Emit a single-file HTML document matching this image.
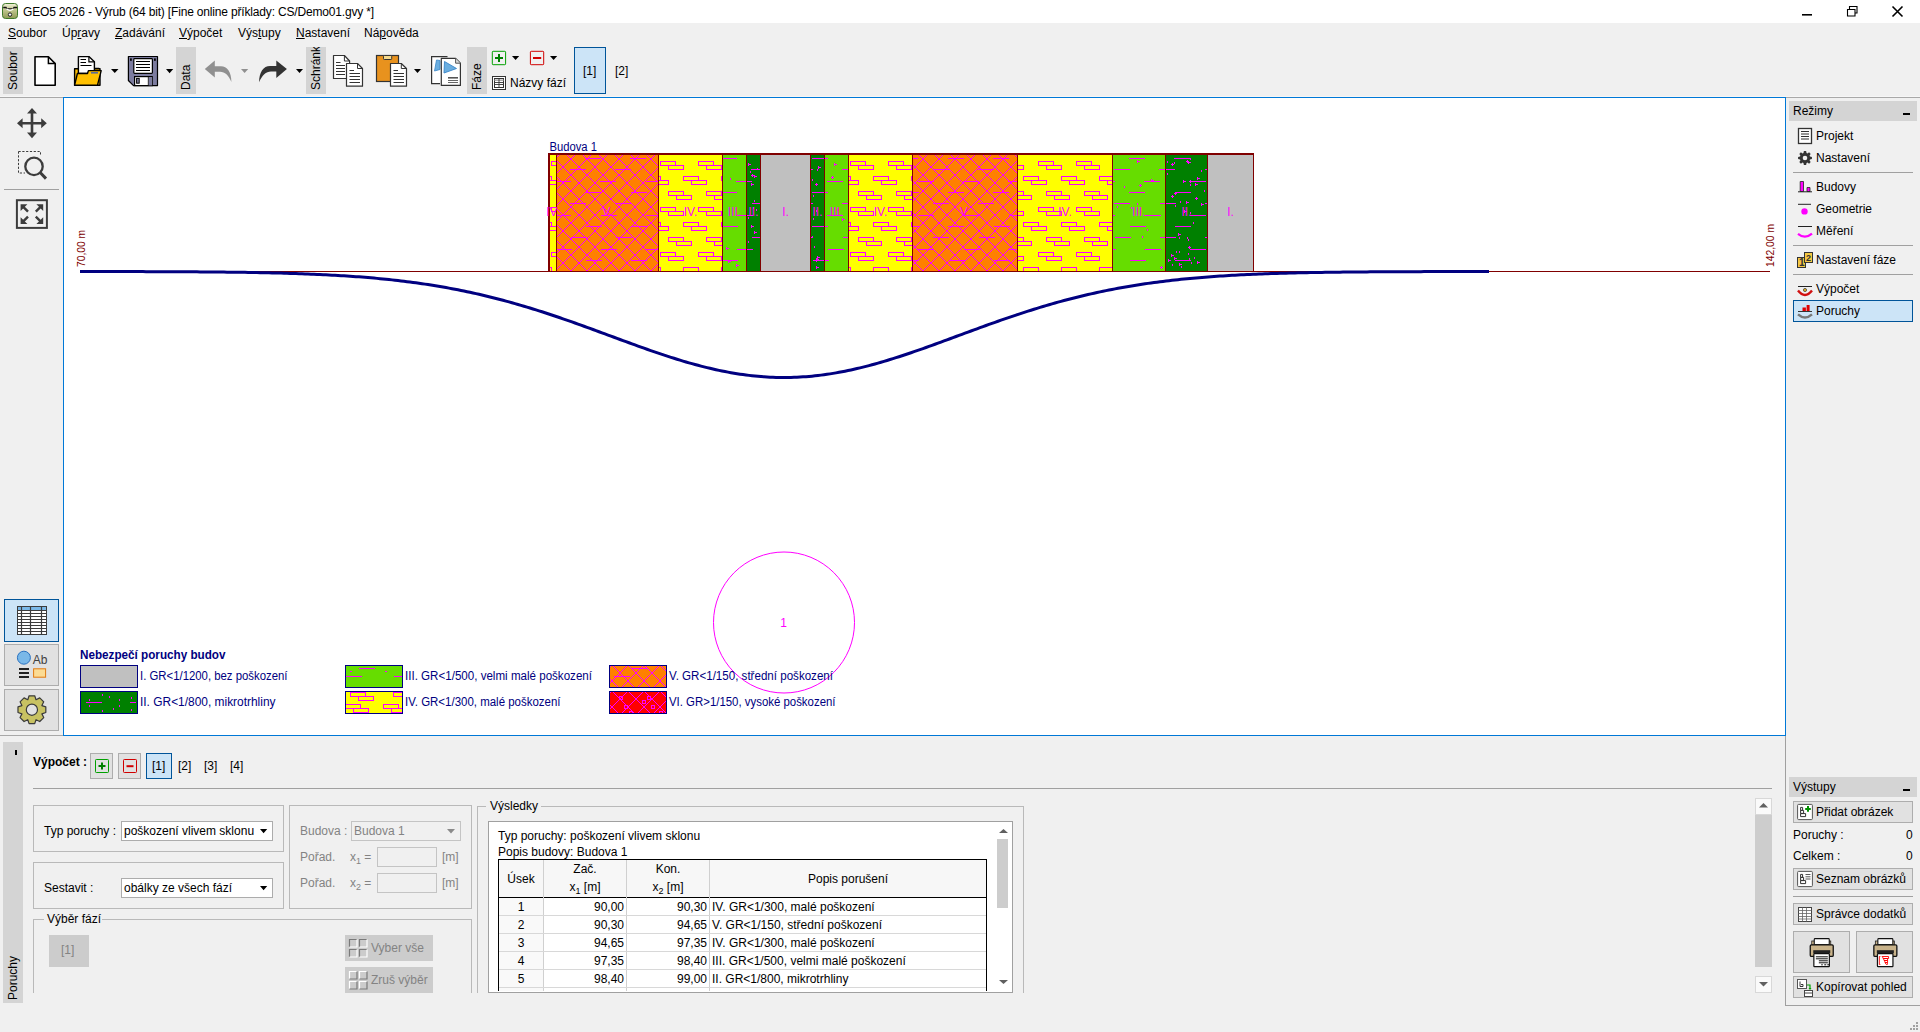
<!DOCTYPE html>
<html><head><meta charset="utf-8">
<style>
*{box-sizing:border-box;margin:0;padding:0}
html,body{width:1920px;height:1032px;overflow:hidden;background:#f0f0f0;font-family:"Liberation Sans",sans-serif;font-size:12px;color:#000}
.a{position:absolute}
.t{position:absolute;white-space:nowrap;line-height:14px}
#title{left:0;top:0;width:1920px;height:23px;background:#fff}
#menu{left:0;top:23px;width:1920px;height:24px;background:#f0f0f0}
.vtab{position:absolute;top:47px;width:20px;height:47px;background:#d4d4d4;overflow:hidden}
.vtab span{position:absolute;left:3px;top:43px;transform-origin:0 0;transform:rotate(-90deg);white-space:nowrap;line-height:14px;font-size:12px}
#canvas{left:63px;top:97px;width:1723px;height:639px;background:#fff;border:1px solid #0078d7}
.btn{position:absolute;background:#e1e1e1;border:1px solid #adadad}
.sel{position:absolute;background:#cce4f7;border:1px solid #005499}
.grp{position:absolute;border:1px solid #b9b9b9}
.combo{position:absolute;background:#fff;border:1px solid #acacac}
.u{text-decoration:underline}
</style></head><body>
<!-- title bar -->
<div id="title" class="a"></div>
<div class="t" style="left:23px;top:5px;font-size:12px;letter-spacing:-0.17px">GEO5 2026 - Výrub (64 bit) [Fine online příklady: CS/Demo01.gvy *]</div>
<svg class="a" style="left:0;top:0" width="1920" height="23">
 <defs><linearGradient id="gi" x1="0" y1="0" x2="0" y2="1"><stop offset="0" stop-color="#f2f2dc"/><stop offset="0.35" stop-color="#c8cc98"/><stop offset="1" stop-color="#8f9a55"/></linearGradient></defs>
 <rect x="2.5" y="3.5" width="15" height="15" rx="3" fill="url(#gi)" stroke="#3f7a2a" stroke-width="1"/>
 <path d="M3.2 7.5H6Q6.5 8.8 8 8.8H12Q13.5 8.8 14 7.5H17" fill="none" stroke="#111" stroke-width="1.3"/>
 <path d="M6.5 8.8Q10 12 13.5 8.8" fill="none" stroke="#fff" stroke-width="1.2"/>
 <circle cx="10" cy="14.6" r="1.7" fill="#fff" stroke="#222" stroke-width="1"/>
 <path d="M1802 14.8h10" stroke="#000" stroke-width="1.6"/>
 <path d="M1847.5 9.5h7.5v6.5h-7.5z" fill="none" stroke="#000" stroke-width="1.1"/>
 <path d="M1849.5 9.5v-3h7.5v6.5h-2" fill="none" stroke="#000" stroke-width="1.1"/>
 <path d="M1892.5 6.5l10 10M1902.5 6.5l-10 10" stroke="#000" stroke-width="1.6"/>
</svg>
<!-- menu -->
<div id="menu" class="a"></div>
<div class="t" style="left:8px;top:26px"><span class="u">S</span>oubor</div>
<div class="t" style="left:62px;top:26px">Ú<span>p</span><span class="u">r</span>avy</div>
<div class="t" style="left:115px;top:26px"><span class="u">Z</span>adávání</div>
<div class="t" style="left:179px;top:26px"><span class="u">V</span>ýpočet</div>
<div class="t" style="left:238px;top:26px">Výs<span class="u">t</span>upy</div>
<div class="t" style="left:296px;top:26px"><span class="u">N</span>astavení</div>
<div class="t" style="left:364px;top:26px">Ná<span class="u">p</span>ověda</div>

<!-- toolbar tabs -->
<div class="vtab" style="left:3px"><span>Soubor</span></div>
<div class="vtab" style="left:176px"><span>Data</span></div>
<div class="vtab" style="left:306px"><span>Schránk</span></div>
<div class="vtab" style="left:467px"><span>Fáze</span></div>
<div class="sel" style="left:574px;top:47px;width:32px;height:47px"></div>
<div class="t" style="left:583px;top:64px">[1]</div>
<div class="t" style="left:615px;top:64px">[2]</div>
<div class="t" style="left:510px;top:76px">Názvy fází</div>

<svg class="a" style="left:0;top:0" width="660" height="96">
 <!-- new -->
 <path d="M35 56.8H48.4L55.2 63.6V85.2H35Z" fill="#fff" stroke="#000" stroke-width="1.6" stroke-linejoin="round"/>
 <path d="M48.4 56.8V63.6H55.2" fill="none" stroke="#000" stroke-width="1.5"/>
 <!-- open -->
 <path d="M74.6 69H80V68.5H98.5V70.5" fill="#ffc000" stroke="#000" stroke-width="1.4"/>
 <path d="M74.6 68.8H100V85.2H74.6Z" fill="#ffc000" stroke="#000" stroke-width="1.4" stroke-linejoin="round"/>
 <path d="M78.4 56.6H88.9L94.4 61.8V73.5H78.4Z" fill="#fff" stroke="#000" stroke-width="1.4" stroke-linejoin="round"/>
 <path d="M88.9 56.6V61.8H94.4" fill="none" stroke="#000" stroke-width="1.2"/>
 <path d="M80.5 59.5h5.5M80.5 62.5h5.5M80.5 65.5h11" stroke="#000" stroke-width="1"/>
 <path d="M77.4 73.5H87.5L88.4 70.6H101.2L97.5 85.2H74.6Z" fill="#ffc000" stroke="#000" stroke-width="1.4" stroke-linejoin="round"/>
 <rect x="91" y="72" width="7" height="1.6" fill="#5b6b9b"/>
 <path d="M111 69H118.5L114.75 73Z" fill="#000"/>
 <!-- save -->
 <path d="M128.4 56.5H157.5V85.6H133.5L128.4 80.5Z" fill="#7c7c9f" stroke="#000" stroke-width="1.2" stroke-linejoin="round"/>
 <rect x="133.8" y="58.6" width="18.6" height="14.8" rx="0.8" fill="#fff" stroke="#000" stroke-width="1.2"/>
 <path d="M136 61.5h14M136 64.5h14M136 67.5h14M136 70.5h14" stroke="#000" stroke-width="1.1"/>
 <rect x="134.6" y="76.6" width="17.6" height="9" fill="#fff" stroke="#000" stroke-width="1.2"/>
 <rect x="148.5" y="77" width="3.4" height="8.4" fill="#7c7c9f"/>
 <path d="M148.3 76.6V85.6" stroke="#000" stroke-width="0.8"/>
 <rect x="136.6" y="78.4" width="2.6" height="4.8" fill="#7c7c9f" stroke="#000" stroke-width="1"/>
 <rect x="130" y="58.4" width="1.8" height="2.4" fill="#000"/><rect x="154" y="58.4" width="1.8" height="2.4" fill="#000"/>
 <path d="M166 69H173.2L169.6 73.2Z" fill="#000"/>
 <!-- undo -->
 <path d="M204.8 69L214.8 60.4V66.3H221C227 66.3 231.4 72 231.4 82C228.5 75 225 71.7 220 71.7H214.8V77.6Z" fill="#909090"/>
 <path d="M241 69H248.2L244.6 73Z" fill="#909090"/>
 <!-- redo -->
 <path d="M286.9 69L276.3 60.4V65.9H270C263.5 65.9 259.1 72 259.1 82.3C262 75.5 266 71.6 271 71.6H276.3V78Z" fill="#333"/>
 <path d="M296 69H303L299.5 73Z" fill="#000"/>
 <!-- copy -->
 <path d="M333.5 55.5H344.4L349.6 61V78.5H333.5Z" fill="#fff" stroke="#333" stroke-width="1.2" stroke-linejoin="round"/>
 <path d="M344.4 55.5V61H349.6" fill="none" stroke="#333" stroke-width="1"/>
 <path d="M336 62.5h4.5M336 65.5h9M336 68.5h9M336 71.5h9M336 74.5h9" stroke="#333" stroke-width="1"/>
 <path d="M346.5 63.5H357.5L362.5 68.5V86.2H346.5Z" fill="#fff" stroke="#333" stroke-width="1.2" stroke-linejoin="round"/>
 <path d="M357.5 63.5V68.5H362.5" fill="none" stroke="#333" stroke-width="1"/>
 <path d="M349.5 70.5h4.5M349.5 73.5h10.5M349.5 76.5h10.5M349.5 79.5h10.5M349.5 82.5h10.5" stroke="#333" stroke-width="1"/>
 <!-- paste -->
 <rect x="376.5" y="55.5" width="22" height="26" fill="#e8921e" stroke="#333" stroke-width="1.2"/>
 <rect x="383.5" y="55.5" width="8.2" height="4" rx="0.8" fill="#f5d98c" stroke="#333" stroke-width="1"/>
 <path d="M390.5 63.5H401.3L406.5 68.5V86.2H390.5Z" fill="#fff" stroke="#333" stroke-width="1.2" stroke-linejoin="round"/>
 <path d="M401.3 63.5V68.5H406.5" fill="none" stroke="#333" stroke-width="1"/>
 <path d="M393.5 70.5h4.5M393.5 73.5h10.5M393.5 76.5h10.5M393.5 79.5h10.5M393.5 82.5h10.5" stroke="#333" stroke-width="1"/>
 <path d="M414 69H421L417.5 73Z" fill="#000"/>
 <!-- picture -->
 <path d="M447.5 56.6H431.6V83.6H440" fill="#fff" stroke="#333" stroke-width="1.2"/>
 <path d="M436.5 60L440 60.5V69.5L434.5 71Z" fill="#6aaee0" stroke="#3a86c8" stroke-width="0.8"/>
 <path d="M441.3 58.4H455.6L460.4 63.2V85.4H441.3Z" fill="#fff" stroke="#333" stroke-width="1.2" stroke-linejoin="round"/>
 <path d="M455.6 58.4V63.2H460.4" fill="#ddd" stroke="#555" stroke-width="1"/>
 <path d="M444.5 61.5L456.5 68.5L444 73Z" fill="#6aaee0" stroke="#3a86c8" stroke-width="0.9"/>
 <path d="M448 77.8h10" stroke="#555" stroke-width="1.6"/><path d="M448 80.5h10M448 82.5h10" stroke="#555" stroke-width="0.9"/>
 <!-- plus/minus -->
 <rect x="492.3" y="51.3" width="13.3" height="13.4" rx="0.8" fill="none" stroke="#00a000" stroke-width="1"/>
 <path d="M495 57.9h8M499 53.9v8" stroke="#008000" stroke-width="2"/>
 <path d="M512 56H519.2L515.6 60Z" fill="#000"/>
 <rect x="530.4" y="51.3" width="13.3" height="13.4" rx="0.8" fill="none" stroke="#d00000" stroke-width="1"/>
 <path d="M533 58h8.2" stroke="#d00000" stroke-width="2"/>
 <path d="M550 56H557.2L553.6 60Z" fill="#000"/>
 <!-- table -->
 <rect x="492.5" y="76.5" width="13" height="13" fill="#fff" stroke="#333" stroke-width="1"/>
 <rect x="494.5" y="78.5" width="9" height="9" fill="none" stroke="#333" stroke-width="1"/>
 <path d="M494.5 80.2h9" stroke="#aaa" stroke-width="1.5"/>
 <path d="M494.5 82.5h9M494.5 84.5h9M499 78.5v9" stroke="#333" stroke-width="0.9"/>
</svg>
<div class="a" style="left:0;top:96px;width:1920px;height:1px;background:#f6f6f6"></div><div class="a" style="left:0;top:97px;width:1920px;height:1px;background:#a8a8a8"></div>
<!-- canvas -->
<div id="canvas" class="a"></div>
<!--CANVAS--><svg class="a" style="left:0;top:0" width="1920" height="1032"><defs><clipPath id="cs0"><rect x="550" y="155" width="6" height="116"/></clipPath><clipPath id="cs1"><rect x="557" y="155" width="101" height="116"/></clipPath><clipPath id="cs2"><rect x="659" y="155" width="63" height="116"/></clipPath><clipPath id="cs3"><rect x="723" y="155" width="23" height="116"/></clipPath><clipPath id="cs4"><rect x="747" y="155" width="13" height="116"/></clipPath><clipPath id="cs5"><rect x="761" y="155" width="49" height="116"/></clipPath><clipPath id="cs6"><rect x="811" y="155" width="13" height="116"/></clipPath><clipPath id="cs7"><rect x="825" y="155" width="23" height="116"/></clipPath><clipPath id="cs8"><rect x="849" y="155" width="63" height="116"/></clipPath><clipPath id="cs9"><rect x="913" y="155" width="104" height="116"/></clipPath><clipPath id="cs10"><rect x="1018" y="155" width="94" height="116"/></clipPath><clipPath id="cs11"><rect x="1113" y="155" width="52" height="116"/></clipPath><clipPath id="cs12"><rect x="1166" y="155" width="41" height="116"/></clipPath><clipPath id="cs13"><rect x="1208" y="155" width="45" height="116"/></clipPath><clipPath id="lg0"><rect x="81" y="666" width="56" height="21"/></clipPath><clipPath id="lg1"><rect x="81" y="692" width="56" height="21"/></clipPath><clipPath id="lg2"><rect x="346" y="666" width="56" height="21"/></clipPath><clipPath id="lg3"><rect x="346" y="692" width="56" height="21"/></clipPath><clipPath id="lg4"><rect x="610" y="666" width="56" height="21"/></clipPath><clipPath id="lg5"><rect x="610" y="692" width="56" height="21"/></clipPath></defs><rect x="550" y="155" width="6" height="116" fill="#ffff00"/><path clip-path="url(#cs0)" d="M437.5 161.5h15v4h-15zM445.5 165.5h15v4h-15zM475.5 161.5h15v4h-15zM483.5 165.5h15v4h-15zM513.5 161.5h15v4h-15zM521.5 165.5h15v4h-15zM551.5 161.5h15v4h-15zM559.5 165.5h15v4h-15zM589.5 161.5h15v4h-15zM597.5 165.5h15v4h-15zM627.5 161.5h15v4h-15zM635.5 165.5h15v4h-15zM665.5 161.5h15v4h-15zM673.5 165.5h15v4h-15zM703.5 161.5h15v4h-15zM711.5 165.5h15v4h-15zM741.5 161.5h15v4h-15zM749.5 165.5h15v4h-15zM779.5 161.5h15v4h-15zM787.5 165.5h15v4h-15zM817.5 161.5h15v4h-15zM825.5 165.5h15v4h-15zM460.5 176.5h15v4h-15zM468.5 180.5h15v4h-15zM498.5 176.5h15v4h-15zM506.5 180.5h15v4h-15zM536.5 176.5h15v4h-15zM544.5 180.5h15v4h-15zM574.5 176.5h15v4h-15zM582.5 180.5h15v4h-15zM612.5 176.5h15v4h-15zM620.5 180.5h15v4h-15zM650.5 176.5h15v4h-15zM658.5 180.5h15v4h-15zM688.5 176.5h15v4h-15zM696.5 180.5h15v4h-15zM726.5 176.5h15v4h-15zM734.5 180.5h15v4h-15zM764.5 176.5h15v4h-15zM772.5 180.5h15v4h-15zM802.5 176.5h15v4h-15zM810.5 180.5h15v4h-15zM840.5 176.5h15v4h-15zM848.5 180.5h15v4h-15zM445.5 191.5h15v4h-15zM453.5 195.5h15v4h-15zM483.5 191.5h15v4h-15zM491.5 195.5h15v4h-15zM521.5 191.5h15v4h-15zM529.5 195.5h15v4h-15zM559.5 191.5h15v4h-15zM567.5 195.5h15v4h-15zM597.5 191.5h15v4h-15zM605.5 195.5h15v4h-15zM635.5 191.5h15v4h-15zM643.5 195.5h15v4h-15zM673.5 191.5h15v4h-15zM681.5 195.5h15v4h-15zM711.5 191.5h15v4h-15zM719.5 195.5h15v4h-15zM749.5 191.5h15v4h-15zM757.5 195.5h15v4h-15zM787.5 191.5h15v4h-15zM795.5 195.5h15v4h-15zM825.5 191.5h15v4h-15zM833.5 195.5h15v4h-15zM437.5 207.5h15v4h-15zM445.5 211.5h15v4h-15zM475.5 207.5h15v4h-15zM483.5 211.5h15v4h-15zM513.5 207.5h15v4h-15zM521.5 211.5h15v4h-15zM551.5 207.5h15v4h-15zM559.5 211.5h15v4h-15zM589.5 207.5h15v4h-15zM597.5 211.5h15v4h-15zM627.5 207.5h15v4h-15zM635.5 211.5h15v4h-15zM665.5 207.5h15v4h-15zM673.5 211.5h15v4h-15zM703.5 207.5h15v4h-15zM711.5 211.5h15v4h-15zM741.5 207.5h15v4h-15zM749.5 211.5h15v4h-15zM779.5 207.5h15v4h-15zM787.5 211.5h15v4h-15zM817.5 207.5h15v4h-15zM825.5 211.5h15v4h-15zM460.5 222.5h15v4h-15zM468.5 226.5h15v4h-15zM498.5 222.5h15v4h-15zM506.5 226.5h15v4h-15zM536.5 222.5h15v4h-15zM544.5 226.5h15v4h-15zM574.5 222.5h15v4h-15zM582.5 226.5h15v4h-15zM612.5 222.5h15v4h-15zM620.5 226.5h15v4h-15zM650.5 222.5h15v4h-15zM658.5 226.5h15v4h-15zM688.5 222.5h15v4h-15zM696.5 226.5h15v4h-15zM726.5 222.5h15v4h-15zM734.5 226.5h15v4h-15zM764.5 222.5h15v4h-15zM772.5 226.5h15v4h-15zM802.5 222.5h15v4h-15zM810.5 226.5h15v4h-15zM840.5 222.5h15v4h-15zM848.5 226.5h15v4h-15zM445.5 237.5h15v4h-15zM453.5 241.5h15v4h-15zM483.5 237.5h15v4h-15zM491.5 241.5h15v4h-15zM521.5 237.5h15v4h-15zM529.5 241.5h15v4h-15zM559.5 237.5h15v4h-15zM567.5 241.5h15v4h-15zM597.5 237.5h15v4h-15zM605.5 241.5h15v4h-15zM635.5 237.5h15v4h-15zM643.5 241.5h15v4h-15zM673.5 237.5h15v4h-15zM681.5 241.5h15v4h-15zM711.5 237.5h15v4h-15zM719.5 241.5h15v4h-15zM749.5 237.5h15v4h-15zM757.5 241.5h15v4h-15zM787.5 237.5h15v4h-15zM795.5 241.5h15v4h-15zM825.5 237.5h15v4h-15zM833.5 241.5h15v4h-15zM437.5 252.5h15v4h-15zM445.5 256.5h15v4h-15zM475.5 252.5h15v4h-15zM483.5 256.5h15v4h-15zM513.5 252.5h15v4h-15zM521.5 256.5h15v4h-15zM551.5 252.5h15v4h-15zM559.5 256.5h15v4h-15zM589.5 252.5h15v4h-15zM597.5 256.5h15v4h-15zM627.5 252.5h15v4h-15zM635.5 256.5h15v4h-15zM665.5 252.5h15v4h-15zM673.5 256.5h15v4h-15zM703.5 252.5h15v4h-15zM711.5 256.5h15v4h-15zM741.5 252.5h15v4h-15zM749.5 256.5h15v4h-15zM779.5 252.5h15v4h-15zM787.5 256.5h15v4h-15zM817.5 252.5h15v4h-15zM825.5 256.5h15v4h-15zM460.5 267.5h15v4h-15zM468.5 271.5h15v4h-15zM498.5 267.5h15v4h-15zM506.5 271.5h15v4h-15zM536.5 267.5h15v4h-15zM544.5 271.5h15v4h-15zM574.5 267.5h15v4h-15zM582.5 271.5h15v4h-15zM612.5 267.5h15v4h-15zM620.5 271.5h15v4h-15zM650.5 267.5h15v4h-15zM658.5 271.5h15v4h-15zM688.5 267.5h15v4h-15zM696.5 271.5h15v4h-15zM726.5 267.5h15v4h-15zM734.5 271.5h15v4h-15zM764.5 267.5h15v4h-15zM772.5 271.5h15v4h-15zM802.5 267.5h15v4h-15zM810.5 271.5h15v4h-15zM840.5 267.5h15v4h-15zM848.5 271.5h15v4h-15z" stroke="#ff00ff" stroke-width="1" fill="none" shape-rendering="crispEdges"/><rect x="557" y="155" width="101" height="116" fill="#ff8000"/><path clip-path="url(#cs1)" d="M-73.0 155.0L43.0 271.0M-65.0 155.0L-181.0 271.0M-57.0 155.0L59.0 271.0M-49.0 155.0L-165.0 271.0M-41.0 155.0L75.0 271.0M-33.0 155.0L-149.0 271.0M-25.0 155.0L91.0 271.0M-17.0 155.0L-133.0 271.0M-9.0 155.0L107.0 271.0M-1.0 155.0L-117.0 271.0M7.0 155.0L123.0 271.0M15.0 155.0L-101.0 271.0M23.0 155.0L139.0 271.0M31.0 155.0L-85.0 271.0M39.0 155.0L155.0 271.0M47.0 155.0L-69.0 271.0M55.0 155.0L171.0 271.0M63.0 155.0L-53.0 271.0M71.0 155.0L187.0 271.0M79.0 155.0L-37.0 271.0M87.0 155.0L203.0 271.0M95.0 155.0L-21.0 271.0M103.0 155.0L219.0 271.0M111.0 155.0L-5.0 271.0M119.0 155.0L235.0 271.0M127.0 155.0L11.0 271.0M135.0 155.0L251.0 271.0M143.0 155.0L27.0 271.0M151.0 155.0L267.0 271.0M159.0 155.0L43.0 271.0M167.0 155.0L283.0 271.0M175.0 155.0L59.0 271.0M183.0 155.0L299.0 271.0M191.0 155.0L75.0 271.0M199.0 155.0L315.0 271.0M207.0 155.0L91.0 271.0M215.0 155.0L331.0 271.0M223.0 155.0L107.0 271.0M231.0 155.0L347.0 271.0M239.0 155.0L123.0 271.0M247.0 155.0L363.0 271.0M255.0 155.0L139.0 271.0M263.0 155.0L379.0 271.0M271.0 155.0L155.0 271.0M279.0 155.0L395.0 271.0M287.0 155.0L171.0 271.0M295.0 155.0L411.0 271.0M303.0 155.0L187.0 271.0M311.0 155.0L427.0 271.0M319.0 155.0L203.0 271.0M327.0 155.0L443.0 271.0M335.0 155.0L219.0 271.0M343.0 155.0L459.0 271.0M351.0 155.0L235.0 271.0M359.0 155.0L475.0 271.0M367.0 155.0L251.0 271.0M375.0 155.0L491.0 271.0M383.0 155.0L267.0 271.0M391.0 155.0L507.0 271.0M399.0 155.0L283.0 271.0M407.0 155.0L523.0 271.0M415.0 155.0L299.0 271.0M423.0 155.0L539.0 271.0M431.0 155.0L315.0 271.0M439.0 155.0L555.0 271.0M447.0 155.0L331.0 271.0M455.0 155.0L571.0 271.0M463.0 155.0L347.0 271.0M471.0 155.0L587.0 271.0M479.0 155.0L363.0 271.0M487.0 155.0L603.0 271.0M495.0 155.0L379.0 271.0M503.0 155.0L619.0 271.0M511.0 155.0L395.0 271.0M519.0 155.0L635.0 271.0M527.0 155.0L411.0 271.0M535.0 155.0L651.0 271.0M543.0 155.0L427.0 271.0M551.0 155.0L667.0 271.0M559.0 155.0L443.0 271.0M567.0 155.0L683.0 271.0M575.0 155.0L459.0 271.0M583.0 155.0L699.0 271.0M591.0 155.0L475.0 271.0M599.0 155.0L715.0 271.0M607.0 155.0L491.0 271.0M615.0 155.0L731.0 271.0M623.0 155.0L507.0 271.0M631.0 155.0L747.0 271.0M639.0 155.0L523.0 271.0M647.0 155.0L763.0 271.0M655.0 155.0L539.0 271.0M663.0 155.0L779.0 271.0M671.0 155.0L555.0 271.0M679.0 155.0L795.0 271.0M687.0 155.0L571.0 271.0M695.0 155.0L811.0 271.0M703.0 155.0L587.0 271.0M711.0 155.0L827.0 271.0M719.0 155.0L603.0 271.0M727.0 155.0L843.0 271.0M735.0 155.0L619.0 271.0M743.0 155.0L859.0 271.0M751.0 155.0L635.0 271.0M759.0 155.0L875.0 271.0M767.0 155.0L651.0 271.0M775.0 155.0L891.0 271.0M783.0 155.0L667.0 271.0M791.0 155.0L907.0 271.0M799.0 155.0L683.0 271.0M807.0 155.0L923.0 271.0M815.0 155.0L699.0 271.0M823.0 155.0L939.0 271.0M831.0 155.0L715.0 271.0M839.0 155.0L955.0 271.0M847.0 155.0L731.0 271.0M855.0 155.0L971.0 271.0M863.0 155.0L747.0 271.0M871.0 155.0L987.0 271.0M879.0 155.0L763.0 271.0M887.0 155.0L1003.0 271.0M895.0 155.0L779.0 271.0M903.0 155.0L1019.0 271.0M911.0 155.0L795.0 271.0M919.0 155.0L1035.0 271.0M927.0 155.0L811.0 271.0M935.0 155.0L1051.0 271.0M943.0 155.0L827.0 271.0M951.0 155.0L1067.0 271.0M959.0 155.0L843.0 271.0M967.0 155.0L1083.0 271.0M975.0 155.0L859.0 271.0M983.0 155.0L1099.0 271.0M991.0 155.0L875.0 271.0M999.0 155.0L1115.0 271.0M1007.0 155.0L891.0 271.0M1015.0 155.0L1131.0 271.0M1023.0 155.0L907.0 271.0M1031.0 155.0L1147.0 271.0M1039.0 155.0L923.0 271.0M1047.0 155.0L1163.0 271.0M1055.0 155.0L939.0 271.0M1063.0 155.0L1179.0 271.0M1071.0 155.0L955.0 271.0M1079.0 155.0L1195.0 271.0M1087.0 155.0L971.0 271.0M1095.0 155.0L1211.0 271.0M1103.0 155.0L987.0 271.0M1111.0 155.0L1227.0 271.0M1119.0 155.0L1003.0 271.0M1127.0 155.0L1243.0 271.0M1135.0 155.0L1019.0 271.0M1143.0 155.0L1259.0 271.0M1151.0 155.0L1035.0 271.0M1159.0 155.0L1275.0 271.0M1167.0 155.0L1051.0 271.0M1175.0 155.0L1291.0 271.0M1183.0 155.0L1067.0 271.0M1191.0 155.0L1307.0 271.0M1199.0 155.0L1083.0 271.0M1207.0 155.0L1323.0 271.0M1215.0 155.0L1099.0 271.0M1223.0 155.0L1339.0 271.0M1231.0 155.0L1115.0 271.0M1239.0 155.0L1355.0 271.0M1247.0 155.0L1131.0 271.0M1255.0 155.0L1371.0 271.0M1263.0 155.0L1147.0 271.0M1271.0 155.0L1387.0 271.0M1279.0 155.0L1163.0 271.0M1287.0 155.0L1403.0 271.0M1295.0 155.0L1179.0 271.0M1303.0 155.0L1419.0 271.0M1311.0 155.0L1195.0 271.0M1319.0 155.0L1435.0 271.0M1327.0 155.0L1211.0 271.0M1335.0 155.0L1451.0 271.0M1343.0 155.0L1227.0 271.0M1351.0 155.0L1467.0 271.0M1359.0 155.0L1243.0 271.0M1367.0 155.0L1483.0 271.0M1375.0 155.0L1259.0 271.0M1383.0 155.0L1499.0 271.0M1391.0 155.0L1275.0 271.0M1399.0 155.0L1515.0 271.0M1407.0 155.0L1291.0 271.0M1415.0 155.0L1531.0 271.0M1423.0 155.0L1307.0 271.0M1431.0 155.0L1547.0 271.0M1439.0 155.0L1323.0 271.0M1447.0 155.0L1563.0 271.0M1455.0 155.0L1339.0 271.0M1463.0 155.0L1579.0 271.0M1471.0 155.0L1355.0 271.0M1479.0 155.0L1595.0 271.0M1487.0 155.0L1371.0 271.0M1495.0 155.0L1611.0 271.0M1503.0 155.0L1387.0 271.0M1511.0 155.0L1627.0 271.0M1519.0 155.0L1403.0 271.0M555 147.5h16M600 147.5h16M645 147.5h16M540 158.5h16M585 158.5h16M630 158.5h16M570 169.5h16M615 169.5h16M555 181.5h16M600 181.5h16M646 181.5h16M540 192.5h16M585 192.5h16M631 192.5h16M570 203.5h16M616 203.5h16M555 215.5h16M601 215.5h16M646 215.5h16M540 226.5h16M586 226.5h16M631 226.5h16M571 237.5h16M616 237.5h16M556 249.5h16M601 249.5h16M646 249.5h16M541 260.5h16M586 260.5h16M631 260.5h16M571 271.5h16M616 271.5h16M556 283.5h16M601 283.5h16M647 283.5h16" stroke="#ff00ff" stroke-width="1" fill="none" shape-rendering="crispEdges"/><rect x="659" y="155" width="63" height="116" fill="#ffff00"/><path clip-path="url(#cs2)" d="M546.5 161.5h15v4h-15zM554.5 165.5h15v4h-15zM584.5 161.5h15v4h-15zM592.5 165.5h15v4h-15zM622.5 161.5h15v4h-15zM630.5 165.5h15v4h-15zM660.5 161.5h15v4h-15zM668.5 165.5h15v4h-15zM698.5 161.5h15v4h-15zM706.5 165.5h15v4h-15zM736.5 161.5h15v4h-15zM744.5 165.5h15v4h-15zM774.5 161.5h15v4h-15zM782.5 165.5h15v4h-15zM812.5 161.5h15v4h-15zM820.5 165.5h15v4h-15zM850.5 161.5h15v4h-15zM858.5 165.5h15v4h-15zM888.5 161.5h15v4h-15zM896.5 165.5h15v4h-15zM926.5 161.5h15v4h-15zM934.5 165.5h15v4h-15zM569.5 176.5h15v4h-15zM577.5 180.5h15v4h-15zM607.5 176.5h15v4h-15zM615.5 180.5h15v4h-15zM645.5 176.5h15v4h-15zM653.5 180.5h15v4h-15zM683.5 176.5h15v4h-15zM691.5 180.5h15v4h-15zM721.5 176.5h15v4h-15zM729.5 180.5h15v4h-15zM759.5 176.5h15v4h-15zM767.5 180.5h15v4h-15zM797.5 176.5h15v4h-15zM805.5 180.5h15v4h-15zM835.5 176.5h15v4h-15zM843.5 180.5h15v4h-15zM873.5 176.5h15v4h-15zM881.5 180.5h15v4h-15zM911.5 176.5h15v4h-15zM919.5 180.5h15v4h-15zM949.5 176.5h15v4h-15zM957.5 180.5h15v4h-15zM554.5 191.5h15v4h-15zM562.5 195.5h15v4h-15zM592.5 191.5h15v4h-15zM600.5 195.5h15v4h-15zM630.5 191.5h15v4h-15zM638.5 195.5h15v4h-15zM668.5 191.5h15v4h-15zM676.5 195.5h15v4h-15zM706.5 191.5h15v4h-15zM714.5 195.5h15v4h-15zM744.5 191.5h15v4h-15zM752.5 195.5h15v4h-15zM782.5 191.5h15v4h-15zM790.5 195.5h15v4h-15zM820.5 191.5h15v4h-15zM828.5 195.5h15v4h-15zM858.5 191.5h15v4h-15zM866.5 195.5h15v4h-15zM896.5 191.5h15v4h-15zM904.5 195.5h15v4h-15zM934.5 191.5h15v4h-15zM942.5 195.5h15v4h-15zM546.5 207.5h15v4h-15zM554.5 211.5h15v4h-15zM584.5 207.5h15v4h-15zM592.5 211.5h15v4h-15zM622.5 207.5h15v4h-15zM630.5 211.5h15v4h-15zM660.5 207.5h15v4h-15zM668.5 211.5h15v4h-15zM698.5 207.5h15v4h-15zM706.5 211.5h15v4h-15zM736.5 207.5h15v4h-15zM744.5 211.5h15v4h-15zM774.5 207.5h15v4h-15zM782.5 211.5h15v4h-15zM812.5 207.5h15v4h-15zM820.5 211.5h15v4h-15zM850.5 207.5h15v4h-15zM858.5 211.5h15v4h-15zM888.5 207.5h15v4h-15zM896.5 211.5h15v4h-15zM926.5 207.5h15v4h-15zM934.5 211.5h15v4h-15zM569.5 222.5h15v4h-15zM577.5 226.5h15v4h-15zM607.5 222.5h15v4h-15zM615.5 226.5h15v4h-15zM645.5 222.5h15v4h-15zM653.5 226.5h15v4h-15zM683.5 222.5h15v4h-15zM691.5 226.5h15v4h-15zM721.5 222.5h15v4h-15zM729.5 226.5h15v4h-15zM759.5 222.5h15v4h-15zM767.5 226.5h15v4h-15zM797.5 222.5h15v4h-15zM805.5 226.5h15v4h-15zM835.5 222.5h15v4h-15zM843.5 226.5h15v4h-15zM873.5 222.5h15v4h-15zM881.5 226.5h15v4h-15zM911.5 222.5h15v4h-15zM919.5 226.5h15v4h-15zM949.5 222.5h15v4h-15zM957.5 226.5h15v4h-15zM554.5 237.5h15v4h-15zM562.5 241.5h15v4h-15zM592.5 237.5h15v4h-15zM600.5 241.5h15v4h-15zM630.5 237.5h15v4h-15zM638.5 241.5h15v4h-15zM668.5 237.5h15v4h-15zM676.5 241.5h15v4h-15zM706.5 237.5h15v4h-15zM714.5 241.5h15v4h-15zM744.5 237.5h15v4h-15zM752.5 241.5h15v4h-15zM782.5 237.5h15v4h-15zM790.5 241.5h15v4h-15zM820.5 237.5h15v4h-15zM828.5 241.5h15v4h-15zM858.5 237.5h15v4h-15zM866.5 241.5h15v4h-15zM896.5 237.5h15v4h-15zM904.5 241.5h15v4h-15zM934.5 237.5h15v4h-15zM942.5 241.5h15v4h-15zM546.5 252.5h15v4h-15zM554.5 256.5h15v4h-15zM584.5 252.5h15v4h-15zM592.5 256.5h15v4h-15zM622.5 252.5h15v4h-15zM630.5 256.5h15v4h-15zM660.5 252.5h15v4h-15zM668.5 256.5h15v4h-15zM698.5 252.5h15v4h-15zM706.5 256.5h15v4h-15zM736.5 252.5h15v4h-15zM744.5 256.5h15v4h-15zM774.5 252.5h15v4h-15zM782.5 256.5h15v4h-15zM812.5 252.5h15v4h-15zM820.5 256.5h15v4h-15zM850.5 252.5h15v4h-15zM858.5 256.5h15v4h-15zM888.5 252.5h15v4h-15zM896.5 256.5h15v4h-15zM926.5 252.5h15v4h-15zM934.5 256.5h15v4h-15zM569.5 267.5h15v4h-15zM577.5 271.5h15v4h-15zM607.5 267.5h15v4h-15zM615.5 271.5h15v4h-15zM645.5 267.5h15v4h-15zM653.5 271.5h15v4h-15zM683.5 267.5h15v4h-15zM691.5 271.5h15v4h-15zM721.5 267.5h15v4h-15zM729.5 271.5h15v4h-15zM759.5 267.5h15v4h-15zM767.5 271.5h15v4h-15zM797.5 267.5h15v4h-15zM805.5 271.5h15v4h-15zM835.5 267.5h15v4h-15zM843.5 271.5h15v4h-15zM873.5 267.5h15v4h-15zM881.5 271.5h15v4h-15zM911.5 267.5h15v4h-15zM919.5 271.5h15v4h-15zM949.5 267.5h15v4h-15zM957.5 271.5h15v4h-15z" stroke="#ff00ff" stroke-width="1" fill="none" shape-rendering="crispEdges"/><rect x="723" y="155" width="23" height="116" fill="#66dd00"/><path clip-path="url(#cs3)" d="M736 264l3 1.5l-3 1.5zM730 178h1v2h-1zM726 247l3 1.5l-3 1.5zM728 260l3 1.5l-3 1.5z" fill="#ff00ff" shape-rendering="crispEdges"/><path clip-path="url(#cs3)" d="M736 147.5h16M721 158.5h16M706 169.5h16M736 181.5h16M721 192.5h16M706 203.5h16M737 215.5h16M722 226.5h16M707 237.5h16M737 249.5h16M722 260.5h16M707 271.5h16M737 283.5h16" stroke="#ff00ff" stroke-width="1" fill="none" shape-rendering="crispEdges"/><rect x="747" y="155" width="13" height="116" fill="#008000"/><path clip-path="url(#cs4)" d="M748 217h1v2h-1zM754 175l3 1.5l-3 1.5zM750 171h1v2h-1zM750.5 175.5l1.5 -1.5l1.5 1.5l-1.5 1.5zM748 241h1v2h-1zM751 225l3 1.5l-3 1.5zM756 209h1v2h-1zM757 168h1v2h-1zM754 200h1v2h-1zM753 207h1v2h-1zM751 183l3 1.5l-3 1.5zM754 231l3 1.5l-3 1.5zM748 163l3 1.5l-3 1.5z" fill="#ff00ff" shape-rendering="crispEdges"/><path clip-path="url(#cs4)" d="M736 147.5h16M751 169.5h16M736 181.5h16M752 203.5h16M737 215.5h16M752 237.5h16M737 249.5h16M752 271.5h16M737 283.5h16" stroke="#ff00ff" stroke-width="1" fill="none" shape-rendering="crispEdges"/><rect x="761" y="155" width="49" height="116" fill="#c0c0c0"/><rect x="811" y="155" width="13" height="116" fill="#008000"/><path clip-path="url(#cs6)" d="M816 210h1v2h-1zM813 195h1v2h-1zM813 218h1v2h-1zM816 260h1v2h-1zM816 266l3 1.5l-3 1.5zM812 236h1v2h-1zM816 258l3 1.5l-3 1.5zM814.5 184.5l1.5 -1.5l1.5 1.5l-1.5 1.5zM818 166l3 1.5l-3 1.5zM814 246h1v2h-1zM812 179h1v2h-1zM817 256l3 1.5l-3 1.5zM817 169h1v2h-1z" fill="#ff00ff" shape-rendering="crispEdges"/><path clip-path="url(#cs6)" d="M812 158.5h16M797 169.5h16M812 192.5h16M797 203.5h16M812 226.5h16M797 237.5h16M813 260.5h16M798 271.5h16" stroke="#ff00ff" stroke-width="1" fill="none" shape-rendering="crispEdges"/><rect x="825" y="155" width="23" height="116" fill="#66dd00"/><path clip-path="url(#cs7)" d="M834 163l3 1.5l-3 1.5zM842 218l3 1.5l-3 1.5zM837 209h1v2h-1zM830.5 177.5l1.5 -1.5l1.5 1.5l-1.5 1.5z" fill="#ff00ff" shape-rendering="crispEdges"/><path clip-path="url(#cs7)" d="M827 147.5h16M812 158.5h16M842 169.5h16M827 181.5h16M812 192.5h16M842 203.5h16M827 215.5h16M812 226.5h16M843 237.5h16M828 249.5h16M813 260.5h16M843 271.5h16M828 283.5h16" stroke="#ff00ff" stroke-width="1" fill="none" shape-rendering="crispEdges"/><rect x="849" y="155" width="63" height="116" fill="#ffff00"/><path clip-path="url(#cs8)" d="M736.5 161.5h15v4h-15zM744.5 165.5h15v4h-15zM774.5 161.5h15v4h-15zM782.5 165.5h15v4h-15zM812.5 161.5h15v4h-15zM820.5 165.5h15v4h-15zM850.5 161.5h15v4h-15zM858.5 165.5h15v4h-15zM888.5 161.5h15v4h-15zM896.5 165.5h15v4h-15zM926.5 161.5h15v4h-15zM934.5 165.5h15v4h-15zM964.5 161.5h15v4h-15zM972.5 165.5h15v4h-15zM1002.5 161.5h15v4h-15zM1010.5 165.5h15v4h-15zM1040.5 161.5h15v4h-15zM1048.5 165.5h15v4h-15zM1078.5 161.5h15v4h-15zM1086.5 165.5h15v4h-15zM1116.5 161.5h15v4h-15zM1124.5 165.5h15v4h-15zM759.5 176.5h15v4h-15zM767.5 180.5h15v4h-15zM797.5 176.5h15v4h-15zM805.5 180.5h15v4h-15zM835.5 176.5h15v4h-15zM843.5 180.5h15v4h-15zM873.5 176.5h15v4h-15zM881.5 180.5h15v4h-15zM911.5 176.5h15v4h-15zM919.5 180.5h15v4h-15zM949.5 176.5h15v4h-15zM957.5 180.5h15v4h-15zM987.5 176.5h15v4h-15zM995.5 180.5h15v4h-15zM1025.5 176.5h15v4h-15zM1033.5 180.5h15v4h-15zM1063.5 176.5h15v4h-15zM1071.5 180.5h15v4h-15zM1101.5 176.5h15v4h-15zM1109.5 180.5h15v4h-15zM1139.5 176.5h15v4h-15zM1147.5 180.5h15v4h-15zM744.5 191.5h15v4h-15zM752.5 195.5h15v4h-15zM782.5 191.5h15v4h-15zM790.5 195.5h15v4h-15zM820.5 191.5h15v4h-15zM828.5 195.5h15v4h-15zM858.5 191.5h15v4h-15zM866.5 195.5h15v4h-15zM896.5 191.5h15v4h-15zM904.5 195.5h15v4h-15zM934.5 191.5h15v4h-15zM942.5 195.5h15v4h-15zM972.5 191.5h15v4h-15zM980.5 195.5h15v4h-15zM1010.5 191.5h15v4h-15zM1018.5 195.5h15v4h-15zM1048.5 191.5h15v4h-15zM1056.5 195.5h15v4h-15zM1086.5 191.5h15v4h-15zM1094.5 195.5h15v4h-15zM1124.5 191.5h15v4h-15zM1132.5 195.5h15v4h-15zM736.5 207.5h15v4h-15zM744.5 211.5h15v4h-15zM774.5 207.5h15v4h-15zM782.5 211.5h15v4h-15zM812.5 207.5h15v4h-15zM820.5 211.5h15v4h-15zM850.5 207.5h15v4h-15zM858.5 211.5h15v4h-15zM888.5 207.5h15v4h-15zM896.5 211.5h15v4h-15zM926.5 207.5h15v4h-15zM934.5 211.5h15v4h-15zM964.5 207.5h15v4h-15zM972.5 211.5h15v4h-15zM1002.5 207.5h15v4h-15zM1010.5 211.5h15v4h-15zM1040.5 207.5h15v4h-15zM1048.5 211.5h15v4h-15zM1078.5 207.5h15v4h-15zM1086.5 211.5h15v4h-15zM1116.5 207.5h15v4h-15zM1124.5 211.5h15v4h-15zM759.5 222.5h15v4h-15zM767.5 226.5h15v4h-15zM797.5 222.5h15v4h-15zM805.5 226.5h15v4h-15zM835.5 222.5h15v4h-15zM843.5 226.5h15v4h-15zM873.5 222.5h15v4h-15zM881.5 226.5h15v4h-15zM911.5 222.5h15v4h-15zM919.5 226.5h15v4h-15zM949.5 222.5h15v4h-15zM957.5 226.5h15v4h-15zM987.5 222.5h15v4h-15zM995.5 226.5h15v4h-15zM1025.5 222.5h15v4h-15zM1033.5 226.5h15v4h-15zM1063.5 222.5h15v4h-15zM1071.5 226.5h15v4h-15zM1101.5 222.5h15v4h-15zM1109.5 226.5h15v4h-15zM1139.5 222.5h15v4h-15zM1147.5 226.5h15v4h-15zM744.5 237.5h15v4h-15zM752.5 241.5h15v4h-15zM782.5 237.5h15v4h-15zM790.5 241.5h15v4h-15zM820.5 237.5h15v4h-15zM828.5 241.5h15v4h-15zM858.5 237.5h15v4h-15zM866.5 241.5h15v4h-15zM896.5 237.5h15v4h-15zM904.5 241.5h15v4h-15zM934.5 237.5h15v4h-15zM942.5 241.5h15v4h-15zM972.5 237.5h15v4h-15zM980.5 241.5h15v4h-15zM1010.5 237.5h15v4h-15zM1018.5 241.5h15v4h-15zM1048.5 237.5h15v4h-15zM1056.5 241.5h15v4h-15zM1086.5 237.5h15v4h-15zM1094.5 241.5h15v4h-15zM1124.5 237.5h15v4h-15zM1132.5 241.5h15v4h-15zM736.5 252.5h15v4h-15zM744.5 256.5h15v4h-15zM774.5 252.5h15v4h-15zM782.5 256.5h15v4h-15zM812.5 252.5h15v4h-15zM820.5 256.5h15v4h-15zM850.5 252.5h15v4h-15zM858.5 256.5h15v4h-15zM888.5 252.5h15v4h-15zM896.5 256.5h15v4h-15zM926.5 252.5h15v4h-15zM934.5 256.5h15v4h-15zM964.5 252.5h15v4h-15zM972.5 256.5h15v4h-15zM1002.5 252.5h15v4h-15zM1010.5 256.5h15v4h-15zM1040.5 252.5h15v4h-15zM1048.5 256.5h15v4h-15zM1078.5 252.5h15v4h-15zM1086.5 256.5h15v4h-15zM1116.5 252.5h15v4h-15zM1124.5 256.5h15v4h-15zM759.5 267.5h15v4h-15zM767.5 271.5h15v4h-15zM797.5 267.5h15v4h-15zM805.5 271.5h15v4h-15zM835.5 267.5h15v4h-15zM843.5 271.5h15v4h-15zM873.5 267.5h15v4h-15zM881.5 271.5h15v4h-15zM911.5 267.5h15v4h-15zM919.5 271.5h15v4h-15zM949.5 267.5h15v4h-15zM957.5 271.5h15v4h-15zM987.5 267.5h15v4h-15zM995.5 271.5h15v4h-15zM1025.5 267.5h15v4h-15zM1033.5 271.5h15v4h-15zM1063.5 267.5h15v4h-15zM1071.5 271.5h15v4h-15zM1101.5 267.5h15v4h-15zM1109.5 271.5h15v4h-15zM1139.5 267.5h15v4h-15zM1147.5 271.5h15v4h-15z" stroke="#ff00ff" stroke-width="1" fill="none" shape-rendering="crispEdges"/><rect x="913" y="155" width="104" height="116" fill="#ff8000"/><path clip-path="url(#cs9)" d="M-73.0 155.0L43.0 271.0M-65.0 155.0L-181.0 271.0M-57.0 155.0L59.0 271.0M-49.0 155.0L-165.0 271.0M-41.0 155.0L75.0 271.0M-33.0 155.0L-149.0 271.0M-25.0 155.0L91.0 271.0M-17.0 155.0L-133.0 271.0M-9.0 155.0L107.0 271.0M-1.0 155.0L-117.0 271.0M7.0 155.0L123.0 271.0M15.0 155.0L-101.0 271.0M23.0 155.0L139.0 271.0M31.0 155.0L-85.0 271.0M39.0 155.0L155.0 271.0M47.0 155.0L-69.0 271.0M55.0 155.0L171.0 271.0M63.0 155.0L-53.0 271.0M71.0 155.0L187.0 271.0M79.0 155.0L-37.0 271.0M87.0 155.0L203.0 271.0M95.0 155.0L-21.0 271.0M103.0 155.0L219.0 271.0M111.0 155.0L-5.0 271.0M119.0 155.0L235.0 271.0M127.0 155.0L11.0 271.0M135.0 155.0L251.0 271.0M143.0 155.0L27.0 271.0M151.0 155.0L267.0 271.0M159.0 155.0L43.0 271.0M167.0 155.0L283.0 271.0M175.0 155.0L59.0 271.0M183.0 155.0L299.0 271.0M191.0 155.0L75.0 271.0M199.0 155.0L315.0 271.0M207.0 155.0L91.0 271.0M215.0 155.0L331.0 271.0M223.0 155.0L107.0 271.0M231.0 155.0L347.0 271.0M239.0 155.0L123.0 271.0M247.0 155.0L363.0 271.0M255.0 155.0L139.0 271.0M263.0 155.0L379.0 271.0M271.0 155.0L155.0 271.0M279.0 155.0L395.0 271.0M287.0 155.0L171.0 271.0M295.0 155.0L411.0 271.0M303.0 155.0L187.0 271.0M311.0 155.0L427.0 271.0M319.0 155.0L203.0 271.0M327.0 155.0L443.0 271.0M335.0 155.0L219.0 271.0M343.0 155.0L459.0 271.0M351.0 155.0L235.0 271.0M359.0 155.0L475.0 271.0M367.0 155.0L251.0 271.0M375.0 155.0L491.0 271.0M383.0 155.0L267.0 271.0M391.0 155.0L507.0 271.0M399.0 155.0L283.0 271.0M407.0 155.0L523.0 271.0M415.0 155.0L299.0 271.0M423.0 155.0L539.0 271.0M431.0 155.0L315.0 271.0M439.0 155.0L555.0 271.0M447.0 155.0L331.0 271.0M455.0 155.0L571.0 271.0M463.0 155.0L347.0 271.0M471.0 155.0L587.0 271.0M479.0 155.0L363.0 271.0M487.0 155.0L603.0 271.0M495.0 155.0L379.0 271.0M503.0 155.0L619.0 271.0M511.0 155.0L395.0 271.0M519.0 155.0L635.0 271.0M527.0 155.0L411.0 271.0M535.0 155.0L651.0 271.0M543.0 155.0L427.0 271.0M551.0 155.0L667.0 271.0M559.0 155.0L443.0 271.0M567.0 155.0L683.0 271.0M575.0 155.0L459.0 271.0M583.0 155.0L699.0 271.0M591.0 155.0L475.0 271.0M599.0 155.0L715.0 271.0M607.0 155.0L491.0 271.0M615.0 155.0L731.0 271.0M623.0 155.0L507.0 271.0M631.0 155.0L747.0 271.0M639.0 155.0L523.0 271.0M647.0 155.0L763.0 271.0M655.0 155.0L539.0 271.0M663.0 155.0L779.0 271.0M671.0 155.0L555.0 271.0M679.0 155.0L795.0 271.0M687.0 155.0L571.0 271.0M695.0 155.0L811.0 271.0M703.0 155.0L587.0 271.0M711.0 155.0L827.0 271.0M719.0 155.0L603.0 271.0M727.0 155.0L843.0 271.0M735.0 155.0L619.0 271.0M743.0 155.0L859.0 271.0M751.0 155.0L635.0 271.0M759.0 155.0L875.0 271.0M767.0 155.0L651.0 271.0M775.0 155.0L891.0 271.0M783.0 155.0L667.0 271.0M791.0 155.0L907.0 271.0M799.0 155.0L683.0 271.0M807.0 155.0L923.0 271.0M815.0 155.0L699.0 271.0M823.0 155.0L939.0 271.0M831.0 155.0L715.0 271.0M839.0 155.0L955.0 271.0M847.0 155.0L731.0 271.0M855.0 155.0L971.0 271.0M863.0 155.0L747.0 271.0M871.0 155.0L987.0 271.0M879.0 155.0L763.0 271.0M887.0 155.0L1003.0 271.0M895.0 155.0L779.0 271.0M903.0 155.0L1019.0 271.0M911.0 155.0L795.0 271.0M919.0 155.0L1035.0 271.0M927.0 155.0L811.0 271.0M935.0 155.0L1051.0 271.0M943.0 155.0L827.0 271.0M951.0 155.0L1067.0 271.0M959.0 155.0L843.0 271.0M967.0 155.0L1083.0 271.0M975.0 155.0L859.0 271.0M983.0 155.0L1099.0 271.0M991.0 155.0L875.0 271.0M999.0 155.0L1115.0 271.0M1007.0 155.0L891.0 271.0M1015.0 155.0L1131.0 271.0M1023.0 155.0L907.0 271.0M1031.0 155.0L1147.0 271.0M1039.0 155.0L923.0 271.0M1047.0 155.0L1163.0 271.0M1055.0 155.0L939.0 271.0M1063.0 155.0L1179.0 271.0M1071.0 155.0L955.0 271.0M1079.0 155.0L1195.0 271.0M1087.0 155.0L971.0 271.0M1095.0 155.0L1211.0 271.0M1103.0 155.0L987.0 271.0M1111.0 155.0L1227.0 271.0M1119.0 155.0L1003.0 271.0M1127.0 155.0L1243.0 271.0M1135.0 155.0L1019.0 271.0M1143.0 155.0L1259.0 271.0M1151.0 155.0L1035.0 271.0M1159.0 155.0L1275.0 271.0M1167.0 155.0L1051.0 271.0M1175.0 155.0L1291.0 271.0M1183.0 155.0L1067.0 271.0M1191.0 155.0L1307.0 271.0M1199.0 155.0L1083.0 271.0M1207.0 155.0L1323.0 271.0M1215.0 155.0L1099.0 271.0M1223.0 155.0L1339.0 271.0M1231.0 155.0L1115.0 271.0M1239.0 155.0L1355.0 271.0M1247.0 155.0L1131.0 271.0M1255.0 155.0L1371.0 271.0M1263.0 155.0L1147.0 271.0M1271.0 155.0L1387.0 271.0M1279.0 155.0L1163.0 271.0M1287.0 155.0L1403.0 271.0M1295.0 155.0L1179.0 271.0M1303.0 155.0L1419.0 271.0M1311.0 155.0L1195.0 271.0M1319.0 155.0L1435.0 271.0M1327.0 155.0L1211.0 271.0M1335.0 155.0L1451.0 271.0M1343.0 155.0L1227.0 271.0M1351.0 155.0L1467.0 271.0M1359.0 155.0L1243.0 271.0M1367.0 155.0L1483.0 271.0M1375.0 155.0L1259.0 271.0M1383.0 155.0L1499.0 271.0M1391.0 155.0L1275.0 271.0M1399.0 155.0L1515.0 271.0M1407.0 155.0L1291.0 271.0M1415.0 155.0L1531.0 271.0M1423.0 155.0L1307.0 271.0M1431.0 155.0L1547.0 271.0M1439.0 155.0L1323.0 271.0M1447.0 155.0L1563.0 271.0M1455.0 155.0L1339.0 271.0M1463.0 155.0L1579.0 271.0M1471.0 155.0L1355.0 271.0M1479.0 155.0L1595.0 271.0M1487.0 155.0L1371.0 271.0M1495.0 155.0L1611.0 271.0M1503.0 155.0L1387.0 271.0M1511.0 155.0L1627.0 271.0M1519.0 155.0L1403.0 271.0M917 147.5h16M963 147.5h16M1008 147.5h16M902 158.5h16M948 158.5h16M993 158.5h16M933 169.5h16M978 169.5h16M918 181.5h16M963 181.5h16M1008 181.5h16M903 192.5h16M948 192.5h16M993 192.5h16M933 203.5h16M978 203.5h16M918 215.5h16M963 215.5h16M1009 215.5h16M903 226.5h16M948 226.5h16M994 226.5h16M933 237.5h16M979 237.5h16M918 249.5h16M964 249.5h16M1009 249.5h16M903 260.5h16M949 260.5h16M994 260.5h16M934 271.5h16M979 271.5h16M919 283.5h16M964 283.5h16M1009 283.5h16" stroke="#ff00ff" stroke-width="1" fill="none" shape-rendering="crispEdges"/><rect x="1018" y="155" width="94" height="116" fill="#ffff00"/><path clip-path="url(#cs10)" d="M886.5 161.5h15v4h-15zM894.5 165.5h15v4h-15zM924.5 161.5h15v4h-15zM932.5 165.5h15v4h-15zM962.5 161.5h15v4h-15zM970.5 165.5h15v4h-15zM1000.5 161.5h15v4h-15zM1008.5 165.5h15v4h-15zM1038.5 161.5h15v4h-15zM1046.5 165.5h15v4h-15zM1076.5 161.5h15v4h-15zM1084.5 165.5h15v4h-15zM1114.5 161.5h15v4h-15zM1122.5 165.5h15v4h-15zM1152.5 161.5h15v4h-15zM1160.5 165.5h15v4h-15zM1190.5 161.5h15v4h-15zM1198.5 165.5h15v4h-15zM1228.5 161.5h15v4h-15zM1236.5 165.5h15v4h-15zM1266.5 161.5h15v4h-15zM1274.5 165.5h15v4h-15zM909.5 176.5h15v4h-15zM917.5 180.5h15v4h-15zM947.5 176.5h15v4h-15zM955.5 180.5h15v4h-15zM985.5 176.5h15v4h-15zM993.5 180.5h15v4h-15zM1023.5 176.5h15v4h-15zM1031.5 180.5h15v4h-15zM1061.5 176.5h15v4h-15zM1069.5 180.5h15v4h-15zM1099.5 176.5h15v4h-15zM1107.5 180.5h15v4h-15zM1137.5 176.5h15v4h-15zM1145.5 180.5h15v4h-15zM1175.5 176.5h15v4h-15zM1183.5 180.5h15v4h-15zM1213.5 176.5h15v4h-15zM1221.5 180.5h15v4h-15zM1251.5 176.5h15v4h-15zM1259.5 180.5h15v4h-15zM1289.5 176.5h15v4h-15zM1297.5 180.5h15v4h-15zM894.5 191.5h15v4h-15zM902.5 195.5h15v4h-15zM932.5 191.5h15v4h-15zM940.5 195.5h15v4h-15zM970.5 191.5h15v4h-15zM978.5 195.5h15v4h-15zM1008.5 191.5h15v4h-15zM1016.5 195.5h15v4h-15zM1046.5 191.5h15v4h-15zM1054.5 195.5h15v4h-15zM1084.5 191.5h15v4h-15zM1092.5 195.5h15v4h-15zM1122.5 191.5h15v4h-15zM1130.5 195.5h15v4h-15zM1160.5 191.5h15v4h-15zM1168.5 195.5h15v4h-15zM1198.5 191.5h15v4h-15zM1206.5 195.5h15v4h-15zM1236.5 191.5h15v4h-15zM1244.5 195.5h15v4h-15zM1274.5 191.5h15v4h-15zM1282.5 195.5h15v4h-15zM886.5 207.5h15v4h-15zM894.5 211.5h15v4h-15zM924.5 207.5h15v4h-15zM932.5 211.5h15v4h-15zM962.5 207.5h15v4h-15zM970.5 211.5h15v4h-15zM1000.5 207.5h15v4h-15zM1008.5 211.5h15v4h-15zM1038.5 207.5h15v4h-15zM1046.5 211.5h15v4h-15zM1076.5 207.5h15v4h-15zM1084.5 211.5h15v4h-15zM1114.5 207.5h15v4h-15zM1122.5 211.5h15v4h-15zM1152.5 207.5h15v4h-15zM1160.5 211.5h15v4h-15zM1190.5 207.5h15v4h-15zM1198.5 211.5h15v4h-15zM1228.5 207.5h15v4h-15zM1236.5 211.5h15v4h-15zM1266.5 207.5h15v4h-15zM1274.5 211.5h15v4h-15zM909.5 222.5h15v4h-15zM917.5 226.5h15v4h-15zM947.5 222.5h15v4h-15zM955.5 226.5h15v4h-15zM985.5 222.5h15v4h-15zM993.5 226.5h15v4h-15zM1023.5 222.5h15v4h-15zM1031.5 226.5h15v4h-15zM1061.5 222.5h15v4h-15zM1069.5 226.5h15v4h-15zM1099.5 222.5h15v4h-15zM1107.5 226.5h15v4h-15zM1137.5 222.5h15v4h-15zM1145.5 226.5h15v4h-15zM1175.5 222.5h15v4h-15zM1183.5 226.5h15v4h-15zM1213.5 222.5h15v4h-15zM1221.5 226.5h15v4h-15zM1251.5 222.5h15v4h-15zM1259.5 226.5h15v4h-15zM1289.5 222.5h15v4h-15zM1297.5 226.5h15v4h-15zM894.5 237.5h15v4h-15zM902.5 241.5h15v4h-15zM932.5 237.5h15v4h-15zM940.5 241.5h15v4h-15zM970.5 237.5h15v4h-15zM978.5 241.5h15v4h-15zM1008.5 237.5h15v4h-15zM1016.5 241.5h15v4h-15zM1046.5 237.5h15v4h-15zM1054.5 241.5h15v4h-15zM1084.5 237.5h15v4h-15zM1092.5 241.5h15v4h-15zM1122.5 237.5h15v4h-15zM1130.5 241.5h15v4h-15zM1160.5 237.5h15v4h-15zM1168.5 241.5h15v4h-15zM1198.5 237.5h15v4h-15zM1206.5 241.5h15v4h-15zM1236.5 237.5h15v4h-15zM1244.5 241.5h15v4h-15zM1274.5 237.5h15v4h-15zM1282.5 241.5h15v4h-15zM886.5 252.5h15v4h-15zM894.5 256.5h15v4h-15zM924.5 252.5h15v4h-15zM932.5 256.5h15v4h-15zM962.5 252.5h15v4h-15zM970.5 256.5h15v4h-15zM1000.5 252.5h15v4h-15zM1008.5 256.5h15v4h-15zM1038.5 252.5h15v4h-15zM1046.5 256.5h15v4h-15zM1076.5 252.5h15v4h-15zM1084.5 256.5h15v4h-15zM1114.5 252.5h15v4h-15zM1122.5 256.5h15v4h-15zM1152.5 252.5h15v4h-15zM1160.5 256.5h15v4h-15zM1190.5 252.5h15v4h-15zM1198.5 256.5h15v4h-15zM1228.5 252.5h15v4h-15zM1236.5 256.5h15v4h-15zM1266.5 252.5h15v4h-15zM1274.5 256.5h15v4h-15zM909.5 267.5h15v4h-15zM917.5 271.5h15v4h-15zM947.5 267.5h15v4h-15zM955.5 271.5h15v4h-15zM985.5 267.5h15v4h-15zM993.5 271.5h15v4h-15zM1023.5 267.5h15v4h-15zM1031.5 271.5h15v4h-15zM1061.5 267.5h15v4h-15zM1069.5 271.5h15v4h-15zM1099.5 267.5h15v4h-15zM1107.5 271.5h15v4h-15zM1137.5 267.5h15v4h-15zM1145.5 271.5h15v4h-15zM1175.5 267.5h15v4h-15zM1183.5 271.5h15v4h-15zM1213.5 267.5h15v4h-15zM1221.5 271.5h15v4h-15zM1251.5 267.5h15v4h-15zM1259.5 271.5h15v4h-15zM1289.5 267.5h15v4h-15zM1297.5 271.5h15v4h-15z" stroke="#ff00ff" stroke-width="1" fill="none" shape-rendering="crispEdges"/><rect x="1113" y="155" width="52" height="116" fill="#66dd00"/><path clip-path="url(#cs11)" d="M1131 207h1v2h-1zM1159.5 267.5l1.5 -1.5l1.5 1.5l-1.5 1.5zM1137 203h1v2h-1zM1137 160l3 1.5l-3 1.5zM1138.5 185.5l1.5 -1.5l1.5 1.5l-1.5 1.5zM1117 206h1v2h-1zM1147 229h1v2h-1zM1142 236h1v2h-1zM1124 186h1v2h-1zM1151 179l3 1.5l-3 1.5z" fill="#ff00ff" shape-rendering="crispEdges"/><path clip-path="url(#cs11)" d="M1099 147.5h16M1144 147.5h16M1129 158.5h16M1114 169.5h16M1159 169.5h16M1099 181.5h16M1144 181.5h16M1129 192.5h16M1114 203.5h16M1160 203.5h16M1099 215.5h16M1145 215.5h16M1130 226.5h16M1115 237.5h16M1160 237.5h16M1100 249.5h16M1145 249.5h16M1130 260.5h16M1115 271.5h16M1160 271.5h16M1100 283.5h16M1145 283.5h16" stroke="#ff00ff" stroke-width="1" fill="none" shape-rendering="crispEdges"/><rect x="1166" y="155" width="41" height="116" fill="#008000"/><path clip-path="url(#cs12)" d="M1176 251h1v2h-1zM1201 170h1v2h-1zM1188 239h1v2h-1zM1187.5 247.5l1.5 -1.5l1.5 1.5l-1.5 1.5zM1190 158h1v2h-1zM1172 264h1v2h-1zM1171 254l3 1.5l-3 1.5zM1183 180l3 1.5l-3 1.5zM1172 196h1v2h-1zM1184 210l3 1.5l-3 1.5zM1194.5 198.5l1.5 -1.5l1.5 1.5l-1.5 1.5zM1195 183l3 1.5l-3 1.5zM1179 263l3 1.5l-3 1.5zM1197 261l3 1.5l-3 1.5zM1185.5 161.5l1.5 -1.5l1.5 1.5l-1.5 1.5zM1173.5 193.5l1.5 -1.5l1.5 1.5l-1.5 1.5zM1188 253h1v2h-1zM1204 190h1v2h-1zM1170.5 164.5l1.5 -1.5l1.5 1.5l-1.5 1.5zM1174 257l3 1.5l-3 1.5zM1170.5 196.5l1.5 -1.5l1.5 1.5l-1.5 1.5zM1179 237h1v2h-1zM1168 259l3 1.5l-3 1.5zM1175 205h1v2h-1zM1191 262h1v2h-1zM1181 266h1v2h-1zM1188.5 181.5l1.5 -1.5l1.5 1.5l-1.5 1.5zM1174 162h1v2h-1zM1190 184h1v2h-1zM1194 257h1v2h-1zM1193 222h1v2h-1zM1188 161l3 1.5l-3 1.5zM1180 201h1v2h-1zM1167 173h1v2h-1zM1167 161h1v2h-1zM1189 258h1v2h-1zM1201 203l3 1.5l-3 1.5zM1190 212h1v2h-1zM1178 233l3 1.5l-3 1.5zM1187 237h1v2h-1zM1179 251h1v2h-1zM1186 201l3 1.5l-3 1.5zM1197 177l3 1.5l-3 1.5z" fill="#ff00ff" shape-rendering="crispEdges"/><path clip-path="url(#cs12)" d="M1189 147.5h16M1174 158.5h16M1159 169.5h16M1205 169.5h16M1190 181.5h16M1175 192.5h16M1160 203.5h16M1205 203.5h16M1190 215.5h16M1175 226.5h16M1160 237.5h16M1205 237.5h16M1190 249.5h16M1175 260.5h16M1160 271.5h16M1206 271.5h16M1191 283.5h16" stroke="#ff00ff" stroke-width="1" fill="none" shape-rendering="crispEdges"/><rect x="1208" y="155" width="45" height="116" fill="#c0c0c0"/><path d="M556.5 155V271M658.5 155V271M722.5 155V271M746.5 155V271M760.5 155V271M810.5 155V271M824.5 155V271M848.5 155V271M912.5 155V271M1017.5 155V271M1112.5 155V271M1165.5 155V271M1207.5 155V271" stroke="#800000" stroke-width="1" shape-rendering="crispEdges"/><path d="M548 153h706v2h-706z M548 155h2v116h-2z M1253 155h1v116h-1z" fill="#800000"/><g font-family="Liberation Sans" font-size="12" fill="#ff00ff"><text x="553.0" y="216" text-anchor="middle">IV.</text><text x="607.5" y="216" text-anchor="middle">V.</text><text x="690.5" y="216" text-anchor="middle">IV.</text><text x="734.5" y="216" text-anchor="middle">III.</text><text x="753.5" y="216" text-anchor="middle">II.</text><text x="785.5" y="216" text-anchor="middle">I.</text><text x="817.5" y="216" text-anchor="middle">II.</text><text x="836.5" y="216" text-anchor="middle">III.</text><text x="880.5" y="216" text-anchor="middle">IV.</text><text x="965.0" y="216" text-anchor="middle">V.</text><text x="1065.0" y="216" text-anchor="middle">IV.</text><text x="1139.0" y="216" text-anchor="middle">III.</text><text x="1186.5" y="216" text-anchor="middle">II.</text><text x="1230.5" y="216" text-anchor="middle">I.</text></g><rect x="80" y="271" width="1690" height="1" fill="#800000"/><polyline points="80,271.53 83,271.53 86,271.53 89,271.54 92,271.54 95,271.54 98,271.54 101,271.55 104,271.55 107,271.55 110,271.56 113,271.56 116,271.57 119,271.57 122,271.58 125,271.58 128,271.59 131,271.59 134,271.60 137,271.61 140,271.61 143,271.62 146,271.63 149,271.64 152,271.64 155,271.65 158,271.66 161,271.67 164,271.69 167,271.70 170,271.71 173,271.72 176,271.74 179,271.75 182,271.77 185,271.78 188,271.80 191,271.82 194,271.84 197,271.86 200,271.88 203,271.90 206,271.93 209,271.95 212,271.98 215,272.00 218,272.03 221,272.06 224,272.10 227,272.13 230,272.17 233,272.20 236,272.24 239,272.29 242,272.33 245,272.37 248,272.42 251,272.47 254,272.52 257,272.58 260,272.64 263,272.70 266,272.76 269,272.83 272,272.90 275,272.97 278,273.05 281,273.12 284,273.21 287,273.29 290,273.38 293,273.48 296,273.58 299,273.68 302,273.79 305,273.90 308,274.01 311,274.13 314,274.26 317,274.39 320,274.53 323,274.67 326,274.82 329,274.97 332,275.13 335,275.30 338,275.47 341,275.65 344,275.83 347,276.03 350,276.22 353,276.43 356,276.65 359,276.87 362,277.10 365,277.34 368,277.58 371,277.84 374,278.10 377,278.37 380,278.66 383,278.95 386,279.25 389,279.56 392,279.88 395,280.21 398,280.55 401,280.90 404,281.26 407,281.64 410,282.02 413,282.42 416,282.82 419,283.24 422,283.67 425,284.12 428,284.57 431,285.04 434,285.52 437,286.01 440,286.52 443,287.03 446,287.57 449,288.11 452,288.67 455,289.24 458,289.83 461,290.42 464,291.04 467,291.66 470,292.30 473,292.96 476,293.63 479,294.31 482,295.01 485,295.72 488,296.44 491,297.18 494,297.93 497,298.70 500,299.48 503,300.27 506,301.08 509,301.90 512,302.74 515,303.59 518,304.45 521,305.32 524,306.21 527,307.11 530,308.02 533,308.95 536,309.89 539,310.84 542,311.80 545,312.77 548,313.75 551,314.74 554,315.75 557,316.76 560,317.78 563,318.82 566,319.86 569,320.90 572,321.96 575,323.02 578,324.09 581,325.17 584,326.25 587,327.34 590,328.43 593,329.53 596,330.63 599,331.73 602,332.84 605,333.95 608,335.05 611,336.16 614,337.27 617,338.38 620,339.48 623,340.59 626,341.69 629,342.78 632,343.88 635,344.96 638,346.05 641,347.12 644,348.19 647,349.25 650,350.30 653,351.34 656,352.37 659,353.39 662,354.40 665,355.40 668,356.38 671,357.35 674,358.30 677,359.24 680,360.16 683,361.07 686,361.95 689,362.82 692,363.67 695,364.50 698,365.31 701,366.10 704,366.87 707,367.61 710,368.33 713,369.03 716,369.71 719,370.36 722,370.98 725,371.58 728,372.15 731,372.69 734,373.21 737,373.70 740,374.16 743,374.60 746,375.00 749,375.38 752,375.72 755,376.04 758,376.32 761,376.58 764,376.80 767,377.00 770,377.16 773,377.29 776,377.39 779,377.46 782,377.49 785,377.50 788,377.47 791,377.41 794,377.33 797,377.20 800,377.05 803,376.87 806,376.66 809,376.41 812,376.14 815,375.83 818,375.50 821,375.13 824,374.74 827,374.31 830,373.86 833,373.38 836,372.87 839,372.33 842,371.77 845,371.18 848,370.57 851,369.93 854,369.26 857,368.57 860,367.86 863,367.12 866,366.36 869,365.58 872,364.77 875,363.95 878,363.11 881,362.24 884,361.36 887,360.46 890,359.55 893,358.61 896,357.67 899,356.70 902,355.72 905,354.73 908,353.73 911,352.71 914,351.69 917,350.65 920,349.60 923,348.54 926,347.48 929,346.40 932,345.33 935,344.24 938,343.15 941,342.05 944,340.95 947,339.85 950,338.75 953,337.64 956,336.53 959,335.42 962,334.31 965,333.21 968,332.10 971,331.00 974,329.90 977,328.80 980,327.71 983,326.62 986,325.53 989,324.45 992,323.38 995,322.31 998,321.26 1001,320.20 1004,319.16 1007,318.13 1010,317.10 1013,316.08 1016,315.08 1019,314.08 1022,313.09 1025,312.12 1028,311.16 1031,310.20 1034,309.26 1037,308.33 1040,307.41 1043,306.51 1046,305.62 1049,304.74 1052,303.87 1055,303.02 1058,302.18 1061,301.35 1064,300.54 1067,299.74 1070,298.96 1073,298.19 1076,297.43 1079,296.68 1082,295.96 1085,295.24 1088,294.54 1091,293.85 1094,293.18 1097,292.52 1100,291.88 1103,291.24 1106,290.63 1109,290.02 1112,289.43 1115,288.86 1118,288.30 1121,287.75 1124,287.21 1127,286.69 1130,286.18 1133,285.68 1136,285.20 1139,284.73 1142,284.27 1145,283.82 1148,283.39 1151,282.96 1154,282.55 1157,282.15 1160,281.76 1163,281.39 1166,281.02 1169,280.67 1172,280.32 1175,279.99 1178,279.66 1181,279.35 1184,279.05 1187,278.75 1190,278.47 1193,278.19 1196,277.92 1199,277.67 1202,277.42 1205,277.18 1208,276.94 1211,276.72 1214,276.50 1217,276.29 1220,276.09 1223,275.90 1226,275.71 1229,275.53 1232,275.35 1235,275.19 1238,275.02 1241,274.87 1244,274.72 1247,274.57 1250,274.44 1253,274.30 1256,274.18 1259,274.05 1262,273.94 1265,273.82 1268,273.71 1271,273.61 1274,273.51 1277,273.41 1280,273.32 1283,273.24 1286,273.15 1289,273.07 1292,272.99 1295,272.92 1298,272.85 1301,272.78 1304,272.72 1307,272.66 1310,272.60 1313,272.54 1316,272.49 1319,272.44 1322,272.39 1325,272.34 1328,272.30 1331,272.26 1334,272.22 1337,272.18 1340,272.14 1343,272.11 1346,272.08 1349,272.04 1352,272.01 1355,271.99 1358,271.96 1361,271.93 1364,271.91 1367,271.89 1370,271.87 1373,271.84 1376,271.82 1379,271.81 1382,271.79 1385,271.77 1388,271.76 1391,271.74 1394,271.73 1397,271.71 1400,271.70 1403,271.69 1406,271.68 1409,271.67 1412,271.66 1415,271.65 1418,271.64 1421,271.63 1424,271.62 1427,271.61 1430,271.61 1433,271.60 1436,271.59 1439,271.59 1442,271.58 1445,271.58 1448,271.57 1451,271.57 1454,271.56 1457,271.56 1460,271.56 1463,271.55 1466,271.55 1469,271.55 1472,271.54 1475,271.54 1478,271.54 1481,271.53 1484,271.53 1487,271.53 1489,271.5" fill="none" stroke="#000080" stroke-width="3" stroke-linejoin="round"/><text x="549.5" y="151" font-family="Liberation Sans" font-size="12" fill="#000080" textLength="47.5" lengthAdjust="spacingAndGlyphs">Budova 1</text><text transform="translate(85,267) rotate(-90)" font-family="Liberation Sans" font-size="11" fill="#800000" textLength="37" lengthAdjust="spacingAndGlyphs">70,00 m</text><text transform="translate(1774,267) rotate(-90)" font-family="Liberation Sans" font-size="11" fill="#800000" textLength="43" lengthAdjust="spacingAndGlyphs">142,00 m</text><circle cx="784" cy="622.5" r="70.5" fill="none" stroke="#ff00ff" stroke-width="1"/><text x="783.5" y="627" text-anchor="middle" font-family="Liberation Sans" font-size="12" fill="#ff00ff">1</text><text x="80" y="659" font-family="Liberation Sans" font-size="12" font-weight="bold" fill="#000080" textLength="145.5" lengthAdjust="spacingAndGlyphs">Nebezpečí poruchy budov</text><rect x="80" y="665" width="58" height="23" fill="#c0c0c0"/><rect x="80.5" y="665.5" width="57" height="22" fill="none" stroke="#000080" stroke-width="1"/><text x="140" y="680" font-family="Liberation Sans" font-size="12" fill="#000080" textLength="147.5" lengthAdjust="spacingAndGlyphs">I. GR&lt;1/1200, bez poškození</text><rect x="80" y="691" width="58" height="23" fill="#008000"/><path clip-path="url(#lg1)" d="M86 702.5h16M130 702.5h6M81 713.5h6M116 713.5h16M89.5 699v2M89.5 705v2M102.5 694v2M109.5 696v2M119.5 699v2M119.5 705v2M131.5 697v2M131.5 709v2M102.5 710v2M113.5 708v2" stroke="#ff00ff" stroke-width="1" fill="none" shape-rendering="crispEdges"/><rect x="80.5" y="691.5" width="57" height="22" fill="none" stroke="#000080" stroke-width="1"/><text x="140" y="706" font-family="Liberation Sans" font-size="12" fill="#000080" textLength="135.5" lengthAdjust="spacingAndGlyphs">II. GR&lt;1/800, mikrotrhliny</text><rect x="345" y="665" width="58" height="23" fill="#66dd00"/><path clip-path="url(#lg2)" d="M359 668.5h16M346 676.5h16M394 676.5h16M350 671.5h2M385 671.5h2" stroke="#ff00ff" stroke-width="1" fill="none" shape-rendering="crispEdges"/><rect x="345.5" y="665.5" width="57" height="22" fill="none" stroke="#000080" stroke-width="1"/><text x="405" y="680" font-family="Liberation Sans" font-size="12" fill="#000080" textLength="187.0" lengthAdjust="spacingAndGlyphs">III. GR&lt;1/500, velmi malé poškození</text><rect x="345" y="691" width="58" height="23" fill="#ffff00"/><path clip-path="url(#lg3)" d="M350.5 692.5h15v4h-15zM358.5 696.5h15v4h-15zM393.5 692.5h15v4h-15zM345.5 704.5h15v4h-15zM353.5 708.5h15v4h-15zM383.5 704.5h15v4h-15zM391.5 708.5h15v4h-15z" stroke="#ff00ff" stroke-width="1" fill="none" shape-rendering="crispEdges"/><rect x="345.5" y="691.5" width="57" height="22" fill="none" stroke="#000080" stroke-width="1"/><text x="405" y="706" font-family="Liberation Sans" font-size="12" fill="#000080" textLength="155.5" lengthAdjust="spacingAndGlyphs">IV. GR&lt;1/300, malé poškození</text><rect x="609" y="665" width="58" height="23" fill="#ff8000"/><path clip-path="url(#lg4)" d="M452.0 665.0L475.0 688.0M452.0 665.0L429.0 688.0M468.0 665.0L491.0 688.0M468.0 665.0L445.0 688.0M484.0 665.0L507.0 688.0M484.0 665.0L461.0 688.0M500.0 665.0L523.0 688.0M500.0 665.0L477.0 688.0M516.0 665.0L539.0 688.0M516.0 665.0L493.0 688.0M532.0 665.0L555.0 688.0M532.0 665.0L509.0 688.0M548.0 665.0L571.0 688.0M548.0 665.0L525.0 688.0M564.0 665.0L587.0 688.0M564.0 665.0L541.0 688.0M580.0 665.0L603.0 688.0M580.0 665.0L557.0 688.0M596.0 665.0L619.0 688.0M596.0 665.0L573.0 688.0M612.0 665.0L635.0 688.0M612.0 665.0L589.0 688.0M628.0 665.0L651.0 688.0M628.0 665.0L605.0 688.0M644.0 665.0L667.0 688.0M644.0 665.0L621.0 688.0M660.0 665.0L683.0 688.0M660.0 665.0L637.0 688.0M676.0 665.0L699.0 688.0M676.0 665.0L653.0 688.0M692.0 665.0L715.0 688.0M692.0 665.0L669.0 688.0M708.0 665.0L731.0 688.0M708.0 665.0L685.0 688.0M724.0 665.0L747.0 688.0M724.0 665.0L701.0 688.0M740.0 665.0L763.0 688.0M740.0 665.0L717.0 688.0M756.0 665.0L779.0 688.0M756.0 665.0L733.0 688.0M772.0 665.0L795.0 688.0M772.0 665.0L749.0 688.0M788.0 665.0L811.0 688.0M788.0 665.0L765.0 688.0M804.0 665.0L827.0 688.0M804.0 665.0L781.0 688.0M820.0 665.0L843.0 688.0M820.0 665.0L797.0 688.0M836.0 665.0L859.0 688.0M836.0 665.0L813.0 688.0M852.0 665.0L875.0 688.0M852.0 665.0L829.0 688.0M868.0 665.0L891.0 688.0M868.0 665.0L845.0 688.0M884.0 665.0L907.0 688.0M884.0 665.0L861.0 688.0M900.0 665.0L923.0 688.0M900.0 665.0L877.0 688.0M916.0 665.0L939.0 688.0M916.0 665.0L893.0 688.0M631 668.5h16M614 676.5h16" stroke="#ff00ff" stroke-width="1" fill="none" shape-rendering="crispEdges"/><rect x="609.5" y="665.5" width="57" height="22" fill="none" stroke="#000080" stroke-width="1"/><text x="669" y="680" font-family="Liberation Sans" font-size="12" fill="#000080" textLength="164.0" lengthAdjust="spacingAndGlyphs">V. GR&lt;1/150, střední poškození</text><rect x="609" y="691" width="58" height="23" fill="#ff0000"/><path clip-path="url(#lg5)" d="M452.0 691.0L475.0 714.0M452.0 691.0L429.0 714.0M468.0 691.0L491.0 714.0M468.0 691.0L445.0 714.0M484.0 691.0L507.0 714.0M484.0 691.0L461.0 714.0M500.0 691.0L523.0 714.0M500.0 691.0L477.0 714.0M516.0 691.0L539.0 714.0M516.0 691.0L493.0 714.0M532.0 691.0L555.0 714.0M532.0 691.0L509.0 714.0M548.0 691.0L571.0 714.0M548.0 691.0L525.0 714.0M564.0 691.0L587.0 714.0M564.0 691.0L541.0 714.0M580.0 691.0L603.0 714.0M580.0 691.0L557.0 714.0M596.0 691.0L619.0 714.0M596.0 691.0L573.0 714.0M612.0 691.0L635.0 714.0M612.0 691.0L589.0 714.0M628.0 691.0L651.0 714.0M628.0 691.0L605.0 714.0M644.0 691.0L667.0 714.0M644.0 691.0L621.0 714.0M660.0 691.0L683.0 714.0M660.0 691.0L637.0 714.0M676.0 691.0L699.0 714.0M676.0 691.0L653.0 714.0M692.0 691.0L715.0 714.0M692.0 691.0L669.0 714.0M708.0 691.0L731.0 714.0M708.0 691.0L685.0 714.0M724.0 691.0L747.0 714.0M724.0 691.0L701.0 714.0M740.0 691.0L763.0 714.0M740.0 691.0L717.0 714.0M756.0 691.0L779.0 714.0M756.0 691.0L733.0 714.0M772.0 691.0L795.0 714.0M772.0 691.0L749.0 714.0M788.0 691.0L811.0 714.0M788.0 691.0L765.0 714.0M804.0 691.0L827.0 714.0M804.0 691.0L781.0 714.0M820.0 691.0L843.0 714.0M820.0 691.0L797.0 714.0M836.0 691.0L859.0 714.0M836.0 691.0L813.0 714.0M852.0 691.0L875.0 714.0M852.0 691.0L829.0 714.0M868.0 691.0L891.0 714.0M868.0 691.0L845.0 714.0M884.0 691.0L907.0 714.0M884.0 691.0L861.0 714.0M900.0 691.0L923.0 714.0M900.0 691.0L877.0 714.0M916.0 691.0L939.0 714.0M916.0 691.0L893.0 714.0M619.5 696.5h3v3h-3zM647.5 696.5h3v3h-3zM624.5 705.5h3v3h-3zM651.5 705.5h3v3h-3zM629.5 711.5h3v3h-3zM659.5 711.5h3v3h-3zM642.5 700.5h3v3h-3z" stroke="#ff00ff" stroke-width="1" fill="none" shape-rendering="crispEdges"/><rect x="609.5" y="691.5" width="57" height="22" fill="none" stroke="#000080" stroke-width="1"/><text x="669" y="706" font-family="Liberation Sans" font-size="12" fill="#000080" textLength="166.5" lengthAdjust="spacingAndGlyphs">VI. GR&gt;1/150, vysoké poškození</text></svg><!--/CANVAS-->

<!-- left tool panel -->
<div class="a" style="left:0;top:735px;width:63px;height:1px;background:#a8a8a8"></div>
<div class="a" style="left:4px;top:189px;width:55px;height:1px;background:#a0a0a0"></div>
<div class="sel" style="left:4px;top:599px;width:55px;height:43px"></div>
<div class="btn" style="left:4px;top:644px;width:55px;height:42px;background:#e1e1e1"></div>
<div class="btn" style="left:4px;top:689px;width:55px;height:42px;background:#e1e1e1"></div>

<!--LEFTICONS--><svg class="a" style="left:0;top:97px" width="63" height="640"><g transform="translate(0,-97)">
 <!-- move -->
 <path d="M20 123.3H44M32 111V135.5" stroke="#3c3c3c" stroke-width="2.6"/>
 <path d="M32 108L27 113.6H37Z M32 138.2L27 132.6H37Z M17 123.3L22.6 118.3V128.3Z M46.8 123.3L41.2 118.3V128.3Z" fill="#3c3c3c"/>
 <!-- zoom -->
 <path d="M18.5 151.5H40.5V156M18.5 151.5V173H25" fill="none" stroke="#3c3c3c" stroke-width="1" stroke-dasharray="2.2,1.6"/>
 <circle cx="34" cy="166.4" r="8.7" fill="none" stroke="#3c3c3c" stroke-width="2.3"/>
 <path d="M40.4 172.8L46 178.6" stroke="#3c3c3c" stroke-width="3"/>
 <!-- fit -->
 <rect x="16.9" y="200.2" width="30" height="27.7" fill="none" stroke="#3c3c3c" stroke-width="2"/>
 <path d="M20.6 204.2h6.8l-6.8 6.8z M43.2 204.2h-6.8l6.8 6.8z M20.6 224h6.8l-6.8 -6.8z M43.2 224h-6.8l6.8 -6.8z" fill="#3c3c3c"/>
 <path d="M23 206.6L28 211.6M40.8 206.6L35.8 211.6M23 221.6L28 216.6M40.8 221.6L35.8 216.6" stroke="#3c3c3c" stroke-width="2.4"/>
 <!-- table icon -->
 <rect x="17.5" y="606.5" width="29" height="28" fill="#fff" stroke="#3c3c3c" stroke-width="1"/>
 <rect x="18" y="607" width="28" height="3.4" fill="#7ab8e8"/>
 <path d="M17.5 610.5h29M17.5 613.5h29M17.5 616.5h29M17.5 619.5h29M17.5 622.5h29M17.5 625.5h29M17.5 628.5h29M17.5 631.5h29" stroke="#3c3c3c" stroke-width="1"/>
 <path d="M21.5 606.5v28M30.5 606.5v28M41.5 606.5v28" stroke="#3c3c3c" stroke-width="1.2"/>
 <!-- Ab icon -->
 <circle cx="23.9" cy="657.7" r="6.5" fill="#7ab8e8" stroke="#2a72c0" stroke-width="1"/>
 <text x="32.8" y="663.6" font-family="Liberation Sans" font-size="12" fill="#404040">Ab</text>
 <path d="M19 669h10M19 673h10M19 677h10" stroke="#222" stroke-width="1.8"/>
 <rect x="33.6" y="668.8" width="12" height="8.4" fill="#fcdc94" stroke="#e07a10" stroke-width="1"/>
 <path d="M41.89 705.59L45.82 706.88L45.82 712.52L41.89 713.81L41.87 713.86L43.74 717.55L39.75 721.54L36.06 719.67L36.01 719.69L34.72 723.62L29.08 723.62L27.79 719.69L27.74 719.67L24.05 721.54L20.06 717.55L21.93 713.86L21.91 713.81L17.98 712.52L17.98 706.88L21.91 705.59L21.93 705.54L20.06 701.85L24.05 697.86L27.74 699.73L27.79 699.71L29.08 695.78L34.72 695.78L36.01 699.71L36.06 699.73L39.75 697.86L43.74 701.85L41.87 705.54Z" fill="#c8c262" stroke="#3a3a3a" stroke-width="1.2" stroke-linejoin="round"/><circle cx="31.9" cy="709.7" r="5.6" fill="#e1e1e1" stroke="#3a3a3a" stroke-width="1.2"/>
</g></svg><!--/LEFTICONS-->
<!-- right panel Rezimy -->
<div class="a" style="left:1789px;top:101px;width:128px;height:20px;background:#d4d4d4"></div>
<div class="t" style="left:1793px;top:104px">Režimy</div>
<div class="a" style="left:1903px;top:113px;width:7px;height:2px;background:#000"></div>
<div class="t" style="left:1816px;top:129px">Projekt</div>
<div class="t" style="left:1816px;top:151px">Nastavení</div>
<div class="a" style="left:1793px;top:172px;width:120px;height:1px;background:#a0a0a0"></div>
<div class="t" style="left:1816px;top:180px">Budovy</div>
<div class="t" style="left:1816px;top:202px">Geometrie</div>
<div class="t" style="left:1816px;top:224px">Měření</div>
<div class="a" style="left:1793px;top:245px;width:120px;height:1px;background:#a0a0a0"></div>
<div class="t" style="left:1816px;top:253px">Nastavení fáze</div>
<div class="a" style="left:1793px;top:274px;width:120px;height:1px;background:#a0a0a0"></div>
<div class="t" style="left:1816px;top:282px">Výpočet</div>
<div class="sel" style="left:1793px;top:300px;width:120px;height:22px"></div>
<div class="t" style="left:1816px;top:304px">Poruchy</div>

<!-- bottom panel -->
<div class="a" style="left:1785px;top:736px;width:1px;height:270px;background:#a0a0a0"></div>
<div class="a" style="left:1785px;top:1005px;width:135px;height:1px;background:#a0a0a0"></div>
<div class="a" style="left:3px;top:742px;width:20px;height:261px;background:#d4d4d4"></div>
<div class="a" style="left:15px;top:750px;width:2px;height:5px;background:#000"></div>
<div class="t" style="left:6px;top:1000px;transform-origin:0 0;transform:rotate(-90deg)">Poruchy</div>

<div class="t" style="left:33px;top:755px;font-weight:bold">Výpočet :</div>
<div class="btn" style="left:90px;top:753px;width:23px;height:26px"></div>
<div class="btn" style="left:118px;top:753px;width:23px;height:26px"></div>
<div class="sel" style="left:146px;top:753px;width:26px;height:26px"></div>
<div class="t" style="left:152px;top:759px">[1]</div>
<div class="t" style="left:178px;top:759px">[2]</div>
<div class="t" style="left:204px;top:759px">[3]</div>
<div class="t" style="left:230px;top:759px">[4]</div>
<div class="a" style="left:33px;top:788px;width:1739px;height:1px;background:#a0a0a0"></div>

<div class="grp" style="left:33px;top:805px;width:251px;height:47px"></div>
<div class="t" style="left:44px;top:824px">Typ poruchy :</div>
<div class="combo" style="left:121px;top:821px;width:152px;height:20px"></div>
<div class="t" style="left:124px;top:824px">poškození vlivem sklonu</div>
<div class="grp" style="left:33px;top:862px;width:251px;height:47px"></div>
<div class="t" style="left:44px;top:881px">Sestavit :</div>
<div class="combo" style="left:121px;top:878px;width:152px;height:20px"></div>
<div class="t" style="left:124px;top:881px">obálky ze všech fází</div>

<div class="grp" style="left:289px;top:805px;width:183px;height:104px"></div>
<div class="t" style="left:300px;top:824px;color:#838383">Budova :</div>
<div class="combo" style="left:351px;top:821px;width:110px;height:20px;background:#f0f0f0;border-color:#c4c4c4"></div>
<div class="t" style="left:354px;top:824px;color:#838383">Budova 1</div>
<div class="t" style="left:300px;top:850px;color:#838383">Pořad.</div>
<div class="t" style="left:350px;top:850px;color:#838383">x<sub style="font-size:9px">1</sub> =</div>
<div class="combo" style="left:377px;top:847px;width:60px;height:20px;background:#f0f0f0;border-color:#c4c4c4"></div>
<div class="t" style="left:442px;top:850px;color:#838383">[m]</div>
<div class="t" style="left:300px;top:876px;color:#838383">Pořad.</div>
<div class="t" style="left:350px;top:876px;color:#838383">x<sub style="font-size:9px">2</sub> =</div>
<div class="combo" style="left:377px;top:873px;width:60px;height:20px;background:#f0f0f0;border-color:#c4c4c4"></div>
<div class="t" style="left:442px;top:876px;color:#838383">[m]</div>

<!-- vyber fazi group -->
<div class="a" style="left:33px;top:919px;width:439px;height:74px;border:1px solid #b9b9b9;border-bottom:none"></div>
<div class="a" style="left:44px;top:912px;width:58px;height:14px;background:#f0f0f0"></div>
<div class="t" style="left:47px;top:912px">Výběr fází</div>
<div class="a" style="left:49px;top:935px;width:40px;height:32px;background:#cccccc"></div>
<div class="t" style="left:61px;top:943px;color:#838383">[1]</div>
<div class="a" style="left:345px;top:935px;width:88px;height:26px;background:#cccccc"></div>
<div class="t" style="left:371px;top:941px;color:#838383">Vyber vše</div>
<div class="a" style="left:345px;top:967px;width:88px;height:26px;background:#cccccc"></div>
<div class="t" style="left:371px;top:973px;color:#838383">Zruš výběr</div>

<!-- vysledky -->
<div class="a" style="left:477px;top:806px;width:547px;height:187px;border:1px solid #b9b9b9;border-bottom:none"></div>
<div class="a" style="left:486px;top:799px;width:55px;height:14px;background:#f0f0f0"></div>
<div class="t" style="left:490px;top:799px">Výsledky</div>
<div class="a" style="left:488px;top:821px;width:525px;height:172px;background:#fff;border:1px solid #a0a0a0"></div>
<div class="t" style="left:498px;top:829px">Typ poruchy: poškození vlivem sklonu</div>
<div class="t" style="left:498px;top:845px">Popis budovy: Budova 1</div>
<div class="a" style="left:498px;top:859px;width:489px;height:132px;background:#fff;border:1px solid #000;border-bottom:none;overflow:hidden">
 <div class="a" style="left:0;top:0;width:487px;height:37px;background:#f7f7f7"></div>
 <div class="a" style="left:0;top:38px;width:44px;height:96px;background:#f9f9f9"></div>
 <div class="a" style="left:0;top:37px;width:487px;height:1px;background:#000"></div>
 <div class="a" style="left:44px;top:0;width:1px;height:134px;background:#d0d0d0"></div>
 <div class="a" style="left:127px;top:0;width:1px;height:134px;background:#d0d0d0"></div>
 <div class="a" style="left:210px;top:0;width:1px;height:134px;background:#d0d0d0"></div>
 <div class="a" style="left:0;top:55px;width:487px;height:1px;background:#d8d8d8"></div>
 <div class="a" style="left:0;top:73px;width:487px;height:1px;background:#d8d8d8"></div>
 <div class="a" style="left:0;top:91px;width:487px;height:1px;background:#d8d8d8"></div>
 <div class="a" style="left:0;top:109px;width:487px;height:1px;background:#d8d8d8"></div>
 <div class="a" style="left:0;top:127px;width:487px;height:1px;background:#d8d8d8"></div>
 <div class="t" style="left:0;width:44px;text-align:center;top:12px">Úsek</div>
 <div class="t" style="left:45px;width:82px;text-align:center;top:2px">Zač.</div>
 <div class="t" style="left:45px;width:82px;text-align:center;top:20px">x<sub style="font-size:9px;line-height:0">1</sub> [m]</div>
 <div class="t" style="left:128px;width:82px;text-align:center;top:2px">Kon.</div>
 <div class="t" style="left:128px;width:82px;text-align:center;top:20px">x<sub style="font-size:9px;line-height:0">2</sub> [m]</div>
 <div class="t" style="left:211px;width:276px;text-align:center;top:12px">Popis porušení</div>
 <div class="t" style="left:0;width:44px;text-align:center;top:40px">1</div>
 <div class="t" style="left:45px;width:80px;text-align:right;top:40px">90,00</div>
 <div class="t" style="left:128px;width:80px;text-align:right;top:40px">90,30</div>
 <div class="t" style="left:213px;top:40px">IV. GR&lt;1/300, malé poškození</div>
 <div class="t" style="left:0;width:44px;text-align:center;top:58px">2</div>
 <div class="t" style="left:45px;width:80px;text-align:right;top:58px">90,30</div>
 <div class="t" style="left:128px;width:80px;text-align:right;top:58px">94,65</div>
 <div class="t" style="left:213px;top:58px">V. GR&lt;1/150, střední poškození</div>
 <div class="t" style="left:0;width:44px;text-align:center;top:76px">3</div>
 <div class="t" style="left:45px;width:80px;text-align:right;top:76px">94,65</div>
 <div class="t" style="left:128px;width:80px;text-align:right;top:76px">97,35</div>
 <div class="t" style="left:213px;top:76px">IV. GR&lt;1/300, malé poškození</div>
 <div class="t" style="left:0;width:44px;text-align:center;top:94px">4</div>
 <div class="t" style="left:45px;width:80px;text-align:right;top:94px">97,35</div>
 <div class="t" style="left:128px;width:80px;text-align:right;top:94px">98,40</div>
 <div class="t" style="left:213px;top:94px">III. GR&lt;1/500, velmi malé poškození</div>
 <div class="t" style="left:0;width:44px;text-align:center;top:112px">5</div>
 <div class="t" style="left:45px;width:80px;text-align:right;top:112px">98,40</div>
 <div class="t" style="left:128px;width:80px;text-align:right;top:112px">99,00</div>
 <div class="t" style="left:213px;top:112px">II. GR&lt;1/800, mikrotrhliny</div>
</div>
<!-- results scrollbar -->
<div class="a" style="left:996px;top:822px;width:15px;height:170px;background:#fff"></div>
<div class="a" style="left:997px;top:839px;width:11px;height:69px;background:#cdcdcd"></div>
<svg class="a" style="left:996px;top:826px" width="15" height="10"><path d="M3 7L7.5 3L12 7z" fill="#606060"/></svg>
<svg class="a" style="left:996px;top:977px" width="15" height="10"><path d="M3 3L7.5 7L12 3z" fill="#606060"/></svg>

<!--BOTICONS--><svg class="a" style="left:0;top:736px" width="1786" height="296"><g transform="translate(0,-736)">
 <rect x="95.5" y="759.5" width="13" height="13" rx="0.8" fill="none" stroke="#00a000" stroke-width="1"/>
 <path d="M98.5 766h7M102 762.5v7" stroke="#008000" stroke-width="2"/>
 <rect x="123.5" y="759.5" width="13" height="13" rx="0.8" fill="none" stroke="#d00000" stroke-width="1"/>
 <path d="M126.5 766.2h7" stroke="#d00000" stroke-width="2"/>
 <path d="M260 829H267.2L263.6 833.2Z M260 886H267.2L263.6 890.2Z" fill="#000"/>
 <path d="M447 829H455L451 833.5Z" fill="#8a8a8a"/>
 <path d="M349.5 947.0V939.5H357.0" fill="none" stroke="#7a7a7a" stroke-width="1.2"/><path d="M349.5 947.0H357.0V939.5" fill="none" stroke="#ffffff" stroke-width="1.2"/><path d="M359.5 947.0V939.5H367.0" fill="none" stroke="#7a7a7a" stroke-width="1.2"/><path d="M359.5 947.0H367.0V939.5" fill="none" stroke="#ffffff" stroke-width="1.2"/><path d="M349.5 957.0V949.5H357.0" fill="none" stroke="#7a7a7a" stroke-width="1.2"/><path d="M349.5 957.0H357.0V949.5" fill="none" stroke="#ffffff" stroke-width="1.2"/><path d="M359.5 957.0V949.5H367.0" fill="none" stroke="#7a7a7a" stroke-width="1.2"/><path d="M359.5 957.0H367.0V949.5" fill="none" stroke="#ffffff" stroke-width="1.2"/><path d="M349.5 979.0V971.5H357.0" fill="none" stroke="#ffffff" stroke-width="1.2"/><path d="M349.5 979.0H357.0V971.5" fill="none" stroke="#7a7a7a" stroke-width="1.2"/><path d="M359.5 979.0V971.5H367.0" fill="none" stroke="#ffffff" stroke-width="1.2"/><path d="M359.5 979.0H367.0V971.5" fill="none" stroke="#7a7a7a" stroke-width="1.2"/><path d="M349.5 989.0V981.5H357.0" fill="none" stroke="#ffffff" stroke-width="1.2"/><path d="M349.5 989.0H357.0V981.5" fill="none" stroke="#7a7a7a" stroke-width="1.2"/><path d="M359.5 989.0V981.5H367.0" fill="none" stroke="#ffffff" stroke-width="1.2"/><path d="M359.5 989.0H367.0V981.5" fill="none" stroke="#7a7a7a" stroke-width="1.2"/>
</g></svg><!--/BOTICONS-->
<!-- bottom right -->
<div class="a" style="left:1755px;top:798px;width:17px;height:17px;background:#fafafa;border:1px solid #d8d8d8"></div>
<div class="a" style="left:1755px;top:815px;width:17px;height:152px;background:#cdcdcd"></div>
<div class="a" style="left:1755px;top:976px;width:17px;height:17px;background:#fafafa;border:1px solid #d8d8d8"></div>
<svg class="a" style="left:1755px;top:798px" width="17" height="195"><path d="M4 9.5L8.5 5L13 9.5z" fill="#606060"/><path d="M4 184L8.5 188.5L13 184z" fill="#606060"/></svg>
<div class="a" style="left:1789px;top:777px;width:128px;height:20px;background:#d4d4d4"></div>
<div class="t" style="left:1793px;top:780px">Výstupy</div>
<div class="a" style="left:1903px;top:789px;width:7px;height:2px;background:#000"></div>
<div class="btn" style="left:1793px;top:801px;width:120px;height:22px"></div>
<div class="t" style="left:1816px;top:805px">Přidat obrázek</div>
<div class="t" style="left:1793px;top:828px">Poruchy :</div>
<div class="t" style="left:1906px;top:828px">0</div>
<div class="t" style="left:1793px;top:849px">Celkem :</div>
<div class="t" style="left:1906px;top:849px">0</div>
<div class="btn" style="left:1793px;top:868px;width:120px;height:22px"></div>
<div class="t" style="left:1816px;top:872px">Seznam obrázků</div>
<div class="a" style="left:1793px;top:896px;width:120px;height:1px;background:#a0a0a0"></div>
<div class="btn" style="left:1793px;top:903px;width:120px;height:22px"></div>
<div class="t" style="left:1816px;top:907px">Správce dodatků</div>
<div class="btn" style="left:1793px;top:931px;width:57px;height:42px"></div>
<div class="btn" style="left:1856px;top:931px;width:57px;height:42px"></div>
<div class="btn" style="left:1793px;top:976px;width:120px;height:22px"></div>
<div class="t" style="left:1816px;top:980px">Kopírovat pohled</div>

<!--RIGHTICONS--><svg class="a" style="left:1786px;top:97px" width="134" height="935"><g transform="translate(-1786,-97)">
 <rect x="1798.5" y="128.5" width="13" height="15" fill="#fff" stroke="#333" stroke-width="1.3"/>
 <path d="M1801 131.5h8M1801 134h8M1801 136.5h8M1801 139h8" stroke="#333" stroke-width="1"/>
 <path d="M1809.97 156.46L1811.91 156.88L1811.91 159.12L1809.97 159.54L1809.60 160.43L1810.68 162.10L1809.10 163.68L1807.43 162.60L1806.54 162.97L1806.12 164.91L1803.88 164.91L1803.46 162.97L1802.57 162.60L1800.90 163.68L1799.32 162.10L1800.40 160.43L1800.03 159.54L1798.09 159.12L1798.09 156.88L1800.03 156.46L1800.40 155.57L1799.32 153.90L1800.90 152.32L1802.57 153.40L1803.46 153.03L1803.88 151.09L1806.12 151.09L1806.54 153.03L1807.43 153.40L1809.10 152.32L1810.68 153.90L1809.60 155.57Z" fill="#333"/><circle cx="1805" cy="158" r="2.3" fill="#f0f0f0"/>
 <path d="M1800.2 181.5h3.3v10h-3.3z M1807 187.5h3v4h-3z" fill="#ff00ff" stroke="#222" stroke-width="0.8"/>
 <path d="M1798 191.8h14" stroke="#222" stroke-width="1"/>
 <path d="M1798 204.3h13" stroke="#222" stroke-width="1"/>
 <circle cx="1804.5" cy="211.4" r="3.2" fill="#ff00ff"/>
 <path d="M1798 226.5h14" stroke="#222" stroke-width="1"/>
 <path d="M1798 233.8Q1805 239.5 1812 233.6" fill="none" stroke="#ff00ff" stroke-width="2.2"/>
 <rect x="1797.5" y="257.5" width="8" height="10" fill="#f5c842" stroke="#333" stroke-width="1"/>
 <rect x="1804.5" y="252.5" width="8" height="10" fill="#f5c842" stroke="#333" stroke-width="1"/>
 <text x="1799" y="266" font-family="Liberation Sans" font-size="10" font-weight="bold" fill="#333">1</text>
 <text x="1806" y="261" font-family="Liberation Sans" font-size="9" font-weight="bold" fill="#333">2</text>
 <path d="M1798 286.5h14" stroke="#222" stroke-width="1"/>
 <circle cx="1805" cy="290" r="1.6" fill="#e8b020" stroke="#333" stroke-width="0.7"/>
 <path d="M1798 290.6Q1805 299.5 1812 290.6" fill="none" stroke="#d01010" stroke-width="2.4"/>
 <rect x="1802.5" y="307.5" width="3.4" height="4" fill="#e00000"/><rect x="1806.6" y="305" width="3" height="6.5" fill="#e00000"/>
 <path d="M1798 311.5h14" stroke="#333" stroke-width="1"/>
 <path d="M1798 314.3Q1805 320.5 1812 314.3" fill="none" stroke="#777" stroke-width="2.4"/>
 
 
 
 
 <rect x="1798.5" y="907.5" width="13" height="14" fill="#fff" stroke="#444" stroke-width="1"/>
 <path d="M1798.5 910.5h13M1798.5 913.5h13M1798.5 916.5h13M1798.5 919h13M1802.5 907.5v14M1806.5 907.5v14" stroke="#666" stroke-width="0.8"/>
 
 
 <rect x="1797.5" y="979.5" width="9" height="9" fill="#fff" stroke="#555" stroke-width="1"/>
 <path d="M1800 981.5v5h3v-2h-2" fill="none" stroke="#222" stroke-width="0.9"/>
 <path d="M1807 985h3v4" fill="none" stroke="#00a000" stroke-width="1.2"/><path d="M1808.5 988l1.5 2 1.5-2z" fill="#00a000"/>
 <rect x="1804.5" y="990.5" width="8" height="6" fill="#fff" stroke="#444" stroke-width="1"/>
 <path d="M1804.5 993h8" stroke="#444" stroke-width="1"/>
<g><rect x="1811.75" y="941" width="19" height="4" fill="#c9b38a" stroke="#222" stroke-width="0.8"/><rect x="1814.25" y="938.6" width="15" height="6" rx="0.8" fill="#fff" stroke="#111" stroke-width="1.1"/><rect x="1810.25" y="944.8" width="23" height="11.6" rx="1.2" fill="#c9b38a" stroke="#111" stroke-width="1.3"/><rect x="1813.25" y="950.2" width="17" height="3" fill="#222"/><rect x="1813.85" y="953.6" width="15.5" height="13" rx="0.6" fill="#fff" stroke="#111" stroke-width="1.2"/><path d="M1815.85 956.8h12M1815.85 958.8h12M1818.85 960.8h9M1818.85 962.8h9" stroke="#111" stroke-width="1"/><path d="M1821.25 964.8h1.5M1824.25 964.8h2M1827.25 964.8h2" stroke="#111" stroke-width="1"/></g><g><rect x="1875.35" y="941" width="19" height="4" fill="#c9b38a" stroke="#222" stroke-width="0.8"/><rect x="1877.85" y="938.6" width="15" height="6" rx="0.8" fill="#fff" stroke="#111" stroke-width="1.1"/><rect x="1873.85" y="944.8" width="23" height="11.6" rx="1.2" fill="#c9b38a" stroke="#111" stroke-width="1.3"/><rect x="1876.85" y="950.2" width="17" height="3" fill="#222"/><rect x="1877.45" y="953.6" width="15.5" height="13" rx="0.6" fill="#fff" stroke="#111" stroke-width="1.2"/><path d="M1880.35 956.5h-1v8h1M1882.05 956.5h6.5v2h-5zM1883.05 958.5h4.5v2h-3zM1884.05 960.5h3.5v2h-2zM1884.85 962.5h2.5v2h-1z" fill="none" stroke="#ff0000" stroke-width="0.9"/></g><rect x="1797.6" y="804.4" width="14.8" height="15.2" rx="1" fill="#fff" stroke="#555" stroke-width="1"/><path d="M1800.6 807.4h2v3h-2z M1800.6 810.4h3v3h-3z M1800.6 813.6h5v3h-5z" fill="none" stroke="#333" stroke-width="1"/><path d="M1805.2 808.9h5.6M1808 806.1v5.6" stroke="#009000" stroke-width="2"/><rect x="1797.6" y="871.4" width="14.8" height="15.2" rx="1" fill="#fff" stroke="#555" stroke-width="1"/><path d="M1800.6 874.4h2v3h-2z M1800.6 877.4h3v3h-3z M1800.6 880.6h5v3h-5z" fill="none" stroke="#333" stroke-width="1"/><path d="M1805.5 874.5h5M1805.5 876.8h5M1805.5 879h5" stroke="#444" stroke-width="0.9"/></g></svg><!--/RIGHTICONS-->
<svg class="a" style="left:1908px;top:1020px" width="12" height="12"><g fill="#a0a0a0"><rect x="8" y="2" width="2" height="2"/><rect x="5" y="5" width="2" height="2"/><rect x="8" y="5" width="2" height="2"/><rect x="2" y="8" width="2" height="2"/><rect x="5" y="8" width="2" height="2"/><rect x="8" y="8" width="2" height="2"/></g></svg>
</body></html>
